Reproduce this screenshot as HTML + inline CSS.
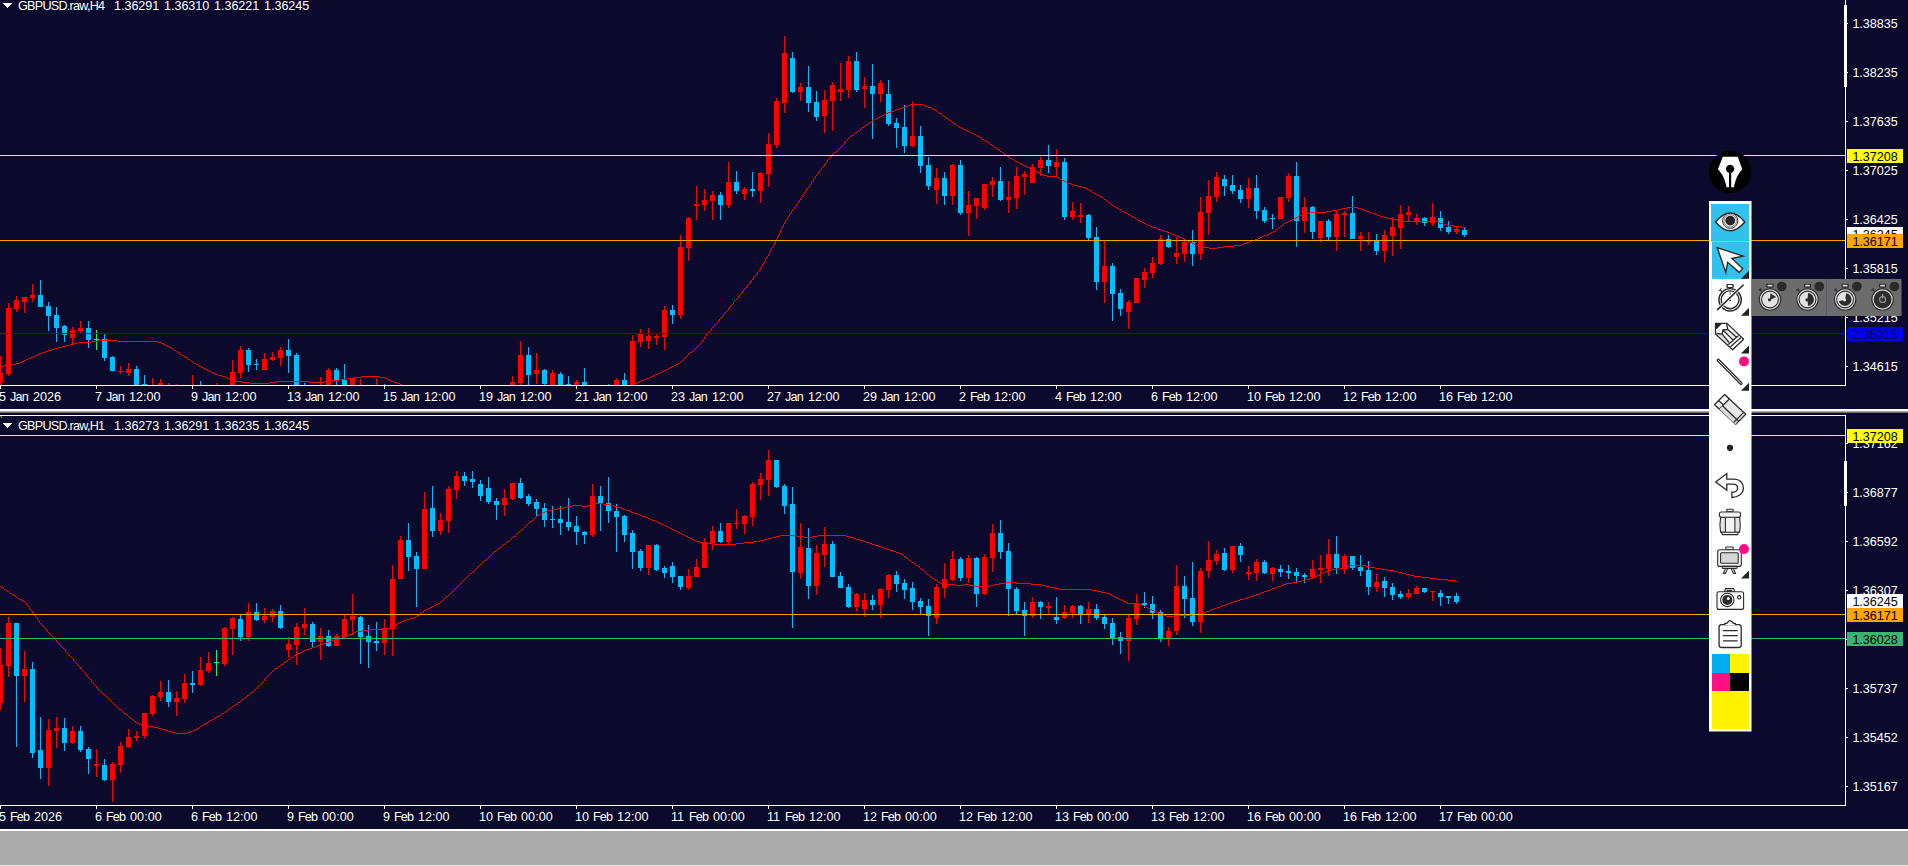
<!DOCTYPE html>
<html><head><meta charset="utf-8"><title>GBPUSD</title>
<style>
html,body{margin:0;padding:0;background:#0b0a2c;}
body{width:1908px;height:866px;position:relative;overflow:hidden;font-family:"Liberation Sans",sans-serif;}
.t{position:absolute;font-size:12.6px;line-height:16px;height:16px;white-space:nowrap;}
.t span{position:absolute;top:0;white-space:pre}
.b{position:absolute;left:1847px;width:56px}
.tri{position:absolute;width:0;height:0;border-left:4.5px solid transparent;border-right:4.5px solid transparent;border-top:5px solid #fff;}
</style></head><body>
<svg width="1908" height="866" viewBox="0 0 1908 866" style="position:absolute;left:0;top:0" shape-rendering="crispEdges">
<defs><clipPath id="ct"><rect x="0" y="0" width="1845" height="385"/></clipPath><clipPath id="cb"><rect x="0" y="416" width="1845" height="389"/></clipPath></defs>
<g clip-path="url(#ct)">
<rect x="0" y="356" width="1" height="29" fill="#ff0000"/>
<rect x="0" y="373" width="3" height="10" fill="#ff0000"/>
<rect x="8" y="303" width="1" height="73" fill="#ff0000"/>
<rect x="6" y="308" width="5" height="66" fill="#ff0000"/>
<rect x="16" y="296" width="1" height="16" fill="#ff0000"/>
<rect x="14" y="300" width="5" height="9" fill="#ff0000"/>
<rect x="24" y="297" width="1" height="16" fill="#ff0000"/>
<rect x="22" y="297" width="5" height="5" fill="#ff0000"/>
<rect x="32" y="284" width="1" height="18" fill="#ff0000"/>
<rect x="30" y="295" width="5" height="3" fill="#ff0000"/>
<rect x="40" y="280" width="1" height="27" fill="#00bfff"/>
<rect x="38" y="295" width="5" height="12" fill="#00bfff"/>
<rect x="48" y="302" width="1" height="29" fill="#00bfff"/>
<rect x="46" y="306" width="5" height="10" fill="#00bfff"/>
<rect x="56" y="307" width="1" height="35" fill="#00bfff"/>
<rect x="54" y="315" width="5" height="13" fill="#00bfff"/>
<rect x="64" y="325" width="1" height="17" fill="#00bfff"/>
<rect x="62" y="326" width="5" height="9" fill="#00bfff"/>
<rect x="72" y="327" width="1" height="17" fill="#ff0000"/>
<rect x="70" y="330" width="5" height="8" fill="#ff0000"/>
<rect x="80" y="321" width="1" height="12" fill="#ff0000"/>
<rect x="78" y="328" width="5" height="3" fill="#ff0000"/>
<rect x="88" y="321" width="1" height="27" fill="#00bfff"/>
<rect x="86" y="328" width="5" height="12" fill="#00bfff"/>
<rect x="96" y="330" width="1" height="20" fill="#00ff7f"/>
<rect x="94" y="339" width="5" height="1" fill="#00ff7f"/>
<rect x="104" y="334" width="1" height="27" fill="#00bfff"/>
<rect x="102" y="339" width="5" height="19" fill="#00bfff"/>
<rect x="112" y="356" width="1" height="15" fill="#00bfff"/>
<rect x="110" y="357" width="5" height="14" fill="#00bfff"/>
<rect x="120" y="366" width="1" height="8" fill="#ff0000"/>
<rect x="118" y="371" width="5" height="1" fill="#ff0000"/>
<rect x="128" y="363" width="1" height="13" fill="#ff0000"/>
<rect x="126" y="369" width="5" height="4" fill="#ff0000"/>
<rect x="136" y="366" width="1" height="19" fill="#00bfff"/>
<rect x="134" y="369" width="5" height="16" fill="#00bfff"/>
<rect x="144" y="375" width="1" height="10" fill="#00bfff"/>
<rect x="142" y="384" width="5" height="1" fill="#00bfff"/>
<rect x="152" y="378" width="1" height="7" fill="#ff0000"/>
<rect x="160" y="379" width="1" height="6" fill="#ff0000"/>
<rect x="158" y="383" width="5" height="2" fill="#ff0000"/>
<rect x="168" y="383" width="1" height="2" fill="#ff0000"/>
<rect x="176" y="384" width="1" height="1" fill="#ff0000"/>
<rect x="192" y="375" width="1" height="10" fill="#ff0000"/>
<rect x="200" y="381" width="1" height="4" fill="#00bfff"/>
<rect x="216" y="383" width="1" height="2" fill="#ff0000"/>
<rect x="232" y="360" width="1" height="25" fill="#ff0000"/>
<rect x="230" y="372" width="5" height="13" fill="#ff0000"/>
<rect x="240" y="346" width="1" height="32" fill="#ff0000"/>
<rect x="238" y="350" width="5" height="23" fill="#ff0000"/>
<rect x="248" y="348" width="1" height="24" fill="#00bfff"/>
<rect x="246" y="350" width="5" height="15" fill="#00bfff"/>
<rect x="256" y="359" width="1" height="11" fill="#00bfff"/>
<rect x="254" y="364" width="5" height="1" fill="#00bfff"/>
<rect x="264" y="353" width="1" height="17" fill="#ff0000"/>
<rect x="262" y="359" width="5" height="11" fill="#ff0000"/>
<rect x="272" y="352" width="1" height="9" fill="#ff0000"/>
<rect x="270" y="357" width="5" height="3" fill="#ff0000"/>
<rect x="280" y="347" width="1" height="19" fill="#ff0000"/>
<rect x="278" y="350" width="5" height="8" fill="#ff0000"/>
<rect x="288" y="339" width="1" height="34" fill="#00bfff"/>
<rect x="286" y="350" width="5" height="6" fill="#00bfff"/>
<rect x="296" y="353" width="1" height="32" fill="#00bfff"/>
<rect x="294" y="355" width="5" height="30" fill="#00bfff"/>
<rect x="304" y="383" width="1" height="2" fill="#00bfff"/>
<rect x="320" y="377" width="1" height="8" fill="#ff0000"/>
<rect x="328" y="368" width="1" height="17" fill="#ff0000"/>
<rect x="326" y="370" width="5" height="15" fill="#ff0000"/>
<rect x="336" y="368" width="1" height="17" fill="#00bfff"/>
<rect x="334" y="370" width="5" height="10" fill="#00bfff"/>
<rect x="344" y="364" width="1" height="21" fill="#00bfff"/>
<rect x="342" y="380" width="5" height="5" fill="#00bfff"/>
<rect x="352" y="378" width="1" height="7" fill="#ff0000"/>
<rect x="350" y="378" width="5" height="7" fill="#ff0000"/>
<rect x="360" y="379" width="1" height="6" fill="#ff0000"/>
<rect x="376" y="379" width="1" height="6" fill="#ff0000"/>
<rect x="384" y="384" width="1" height="1" fill="#00bfff"/>
<rect x="512" y="376" width="1" height="9" fill="#ff0000"/>
<rect x="510" y="382" width="5" height="3" fill="#ff0000"/>
<rect x="520" y="341" width="1" height="44" fill="#ff0000"/>
<rect x="518" y="355" width="5" height="28" fill="#ff0000"/>
<rect x="528" y="347" width="1" height="38" fill="#00bfff"/>
<rect x="526" y="355" width="5" height="20" fill="#00bfff"/>
<rect x="536" y="353" width="1" height="31" fill="#ff0000"/>
<rect x="534" y="370" width="5" height="4" fill="#ff0000"/>
<rect x="544" y="369" width="1" height="16" fill="#00bfff"/>
<rect x="542" y="370" width="5" height="14" fill="#00bfff"/>
<rect x="552" y="370" width="1" height="15" fill="#ff0000"/>
<rect x="550" y="373" width="5" height="12" fill="#ff0000"/>
<rect x="560" y="372" width="1" height="13" fill="#00bfff"/>
<rect x="558" y="374" width="5" height="11" fill="#00bfff"/>
<rect x="568" y="376" width="1" height="9" fill="#00bfff"/>
<rect x="566" y="384" width="5" height="1" fill="#00bfff"/>
<rect x="576" y="380" width="1" height="5" fill="#ff0000"/>
<rect x="574" y="382" width="5" height="3" fill="#ff0000"/>
<rect x="584" y="368" width="1" height="17" fill="#00bfff"/>
<rect x="582" y="382" width="5" height="3" fill="#00bfff"/>
<rect x="608" y="384" width="1" height="1" fill="#00bfff"/>
<rect x="616" y="378" width="1" height="7" fill="#ff0000"/>
<rect x="614" y="380" width="5" height="5" fill="#ff0000"/>
<rect x="624" y="373" width="1" height="12" fill="#00bfff"/>
<rect x="622" y="380" width="5" height="5" fill="#00bfff"/>
<rect x="632" y="335" width="1" height="50" fill="#ff0000"/>
<rect x="630" y="341" width="5" height="44" fill="#ff0000"/>
<rect x="640" y="329" width="1" height="18" fill="#ff0000"/>
<rect x="638" y="334" width="5" height="8" fill="#ff0000"/>
<rect x="648" y="328" width="1" height="21" fill="#ff0000"/>
<rect x="646" y="336" width="5" height="5" fill="#ff0000"/>
<rect x="656" y="334" width="1" height="11" fill="#ff0000"/>
<rect x="654" y="336" width="5" height="2" fill="#ff0000"/>
<rect x="664" y="306" width="1" height="44" fill="#ff0000"/>
<rect x="662" y="310" width="5" height="27" fill="#ff0000"/>
<rect x="672" y="305" width="1" height="19" fill="#00bfff"/>
<rect x="670" y="310" width="5" height="5" fill="#00bfff"/>
<rect x="680" y="235" width="1" height="84" fill="#ff0000"/>
<rect x="678" y="247" width="5" height="68" fill="#ff0000"/>
<rect x="688" y="217" width="1" height="44" fill="#ff0000"/>
<rect x="686" y="218" width="5" height="30" fill="#ff0000"/>
<rect x="696" y="186" width="1" height="34" fill="#ff0000"/>
<rect x="694" y="204" width="5" height="2" fill="#ff0000"/>
<rect x="704" y="189" width="1" height="22" fill="#ff0000"/>
<rect x="702" y="200" width="5" height="5" fill="#ff0000"/>
<rect x="712" y="191" width="1" height="29" fill="#ff0000"/>
<rect x="710" y="195" width="5" height="6" fill="#ff0000"/>
<rect x="720" y="192" width="1" height="28" fill="#00bfff"/>
<rect x="718" y="195" width="5" height="10" fill="#00bfff"/>
<rect x="728" y="162" width="1" height="46" fill="#ff0000"/>
<rect x="726" y="182" width="5" height="23" fill="#ff0000"/>
<rect x="736" y="171" width="1" height="23" fill="#00bfff"/>
<rect x="734" y="182" width="5" height="9" fill="#00bfff"/>
<rect x="744" y="187" width="1" height="13" fill="#ff0000"/>
<rect x="742" y="189" width="5" height="5" fill="#ff0000"/>
<rect x="752" y="172" width="1" height="25" fill="#00bfff"/>
<rect x="750" y="189" width="5" height="2" fill="#00bfff"/>
<rect x="760" y="172" width="1" height="31" fill="#ff0000"/>
<rect x="758" y="173" width="5" height="18" fill="#ff0000"/>
<rect x="768" y="133" width="1" height="54" fill="#ff0000"/>
<rect x="766" y="144" width="5" height="30" fill="#ff0000"/>
<rect x="776" y="98" width="1" height="50" fill="#ff0000"/>
<rect x="774" y="101" width="5" height="44" fill="#ff0000"/>
<rect x="784" y="36" width="1" height="77" fill="#ff0000"/>
<rect x="782" y="53" width="5" height="50" fill="#ff0000"/>
<rect x="792" y="52" width="1" height="41" fill="#00bfff"/>
<rect x="790" y="58" width="5" height="34" fill="#00bfff"/>
<rect x="800" y="83" width="1" height="18" fill="#ff0000"/>
<rect x="798" y="87" width="5" height="5" fill="#ff0000"/>
<rect x="808" y="66" width="1" height="46" fill="#00bfff"/>
<rect x="806" y="87" width="5" height="16" fill="#00bfff"/>
<rect x="816" y="91" width="1" height="30" fill="#00bfff"/>
<rect x="814" y="102" width="5" height="15" fill="#00bfff"/>
<rect x="824" y="90" width="1" height="43" fill="#ff0000"/>
<rect x="822" y="100" width="5" height="16" fill="#ff0000"/>
<rect x="832" y="82" width="1" height="49" fill="#ff0000"/>
<rect x="830" y="85" width="5" height="16" fill="#ff0000"/>
<rect x="840" y="63" width="1" height="38" fill="#ff0000"/>
<rect x="838" y="89" width="5" height="3" fill="#ff0000"/>
<rect x="848" y="56" width="1" height="42" fill="#ff0000"/>
<rect x="846" y="61" width="5" height="29" fill="#ff0000"/>
<rect x="856" y="52" width="1" height="40" fill="#00bfff"/>
<rect x="854" y="61" width="5" height="29" fill="#00bfff"/>
<rect x="864" y="77" width="1" height="31" fill="#ff0000"/>
<rect x="862" y="86" width="5" height="3" fill="#ff0000"/>
<rect x="872" y="64" width="1" height="75" fill="#00bfff"/>
<rect x="870" y="86" width="5" height="8" fill="#00bfff"/>
<rect x="880" y="80" width="1" height="22" fill="#ff0000"/>
<rect x="878" y="83" width="5" height="11" fill="#ff0000"/>
<rect x="888" y="80" width="1" height="46" fill="#00bfff"/>
<rect x="886" y="94" width="5" height="30" fill="#00bfff"/>
<rect x="896" y="118" width="1" height="30" fill="#00bfff"/>
<rect x="894" y="123" width="5" height="5" fill="#00bfff"/>
<rect x="904" y="105" width="1" height="48" fill="#00bfff"/>
<rect x="902" y="127" width="5" height="19" fill="#00bfff"/>
<rect x="912" y="101" width="1" height="46" fill="#ff0000"/>
<rect x="910" y="136" width="5" height="10" fill="#ff0000"/>
<rect x="920" y="126" width="1" height="47" fill="#00bfff"/>
<rect x="918" y="136" width="5" height="30" fill="#00bfff"/>
<rect x="928" y="157" width="1" height="33" fill="#00bfff"/>
<rect x="926" y="165" width="5" height="21" fill="#00bfff"/>
<rect x="936" y="168" width="1" height="36" fill="#ff0000"/>
<rect x="934" y="178" width="5" height="12" fill="#ff0000"/>
<rect x="944" y="172" width="1" height="33" fill="#00bfff"/>
<rect x="942" y="178" width="5" height="18" fill="#00bfff"/>
<rect x="952" y="164" width="1" height="41" fill="#ff0000"/>
<rect x="950" y="165" width="5" height="31" fill="#ff0000"/>
<rect x="960" y="160" width="1" height="55" fill="#00bfff"/>
<rect x="958" y="165" width="5" height="48" fill="#00bfff"/>
<rect x="968" y="191" width="1" height="45" fill="#ff0000"/>
<rect x="966" y="205" width="5" height="8" fill="#ff0000"/>
<rect x="976" y="198" width="1" height="21" fill="#ff0000"/>
<rect x="974" y="198" width="5" height="8" fill="#ff0000"/>
<rect x="984" y="184" width="1" height="26" fill="#ff0000"/>
<rect x="982" y="184" width="5" height="24" fill="#ff0000"/>
<rect x="992" y="177" width="1" height="20" fill="#ff0000"/>
<rect x="990" y="181" width="5" height="4" fill="#ff0000"/>
<rect x="1000" y="167" width="1" height="34" fill="#00bfff"/>
<rect x="998" y="181" width="5" height="19" fill="#00bfff"/>
<rect x="1008" y="181" width="1" height="32" fill="#ff0000"/>
<rect x="1006" y="197" width="5" height="3" fill="#ff0000"/>
<rect x="1016" y="167" width="1" height="42" fill="#ff0000"/>
<rect x="1014" y="176" width="5" height="22" fill="#ff0000"/>
<rect x="1024" y="171" width="1" height="24" fill="#ff0000"/>
<rect x="1022" y="174" width="5" height="3" fill="#ff0000"/>
<rect x="1032" y="164" width="1" height="19" fill="#ff0000"/>
<rect x="1030" y="167" width="5" height="16" fill="#ff0000"/>
<rect x="1040" y="157" width="1" height="19" fill="#ff0000"/>
<rect x="1038" y="160" width="5" height="8" fill="#ff0000"/>
<rect x="1048" y="145" width="1" height="28" fill="#00bfff"/>
<rect x="1046" y="160" width="5" height="6" fill="#00bfff"/>
<rect x="1056" y="149" width="1" height="28" fill="#ff0000"/>
<rect x="1054" y="162" width="5" height="5" fill="#ff0000"/>
<rect x="1064" y="158" width="1" height="62" fill="#00bfff"/>
<rect x="1062" y="162" width="5" height="55" fill="#00bfff"/>
<rect x="1072" y="202" width="1" height="18" fill="#ff0000"/>
<rect x="1070" y="211" width="5" height="6" fill="#ff0000"/>
<rect x="1080" y="203" width="1" height="20" fill="#ff0000"/>
<rect x="1078" y="215" width="5" height="2" fill="#ff0000"/>
<rect x="1088" y="214" width="1" height="26" fill="#00bfff"/>
<rect x="1086" y="215" width="5" height="23" fill="#00bfff"/>
<rect x="1096" y="227" width="1" height="63" fill="#00bfff"/>
<rect x="1094" y="237" width="5" height="45" fill="#00bfff"/>
<rect x="1104" y="241" width="1" height="62" fill="#ff0000"/>
<rect x="1102" y="266" width="5" height="16" fill="#ff0000"/>
<rect x="1112" y="263" width="1" height="58" fill="#00bfff"/>
<rect x="1110" y="266" width="5" height="28" fill="#00bfff"/>
<rect x="1120" y="289" width="1" height="27" fill="#00bfff"/>
<rect x="1118" y="293" width="5" height="16" fill="#00bfff"/>
<rect x="1128" y="300" width="1" height="29" fill="#ff0000"/>
<rect x="1126" y="302" width="5" height="10" fill="#ff0000"/>
<rect x="1136" y="278" width="1" height="25" fill="#ff0000"/>
<rect x="1134" y="278" width="5" height="25" fill="#ff0000"/>
<rect x="1144" y="268" width="1" height="20" fill="#ff0000"/>
<rect x="1142" y="272" width="5" height="8" fill="#ff0000"/>
<rect x="1152" y="257" width="1" height="21" fill="#ff0000"/>
<rect x="1150" y="263" width="5" height="10" fill="#ff0000"/>
<rect x="1160" y="235" width="1" height="30" fill="#ff0000"/>
<rect x="1158" y="239" width="5" height="25" fill="#ff0000"/>
<rect x="1168" y="235" width="1" height="13" fill="#00bfff"/>
<rect x="1166" y="239" width="5" height="8" fill="#00bfff"/>
<rect x="1176" y="237" width="1" height="27" fill="#ff0000"/>
<rect x="1174" y="253" width="5" height="4" fill="#ff0000"/>
<rect x="1184" y="240" width="1" height="22" fill="#ff0000"/>
<rect x="1182" y="242" width="5" height="12" fill="#ff0000"/>
<rect x="1192" y="230" width="1" height="36" fill="#00bfff"/>
<rect x="1190" y="242" width="5" height="12" fill="#00bfff"/>
<rect x="1200" y="197" width="1" height="63" fill="#ff0000"/>
<rect x="1198" y="212" width="5" height="42" fill="#ff0000"/>
<rect x="1208" y="180" width="1" height="55" fill="#ff0000"/>
<rect x="1206" y="196" width="5" height="17" fill="#ff0000"/>
<rect x="1216" y="172" width="1" height="30" fill="#ff0000"/>
<rect x="1214" y="177" width="5" height="20" fill="#ff0000"/>
<rect x="1224" y="175" width="1" height="21" fill="#00bfff"/>
<rect x="1222" y="179" width="5" height="7" fill="#00bfff"/>
<rect x="1232" y="175" width="1" height="19" fill="#00bfff"/>
<rect x="1230" y="185" width="5" height="6" fill="#00bfff"/>
<rect x="1240" y="185" width="1" height="18" fill="#00bfff"/>
<rect x="1238" y="190" width="5" height="9" fill="#00bfff"/>
<rect x="1248" y="178" width="1" height="30" fill="#ff0000"/>
<rect x="1246" y="188" width="5" height="11" fill="#ff0000"/>
<rect x="1256" y="175" width="1" height="44" fill="#00bfff"/>
<rect x="1254" y="188" width="5" height="23" fill="#00bfff"/>
<rect x="1264" y="207" width="1" height="16" fill="#00bfff"/>
<rect x="1262" y="210" width="5" height="11" fill="#00bfff"/>
<rect x="1272" y="214" width="1" height="15" fill="#00bfff"/>
<rect x="1270" y="218" width="5" height="1" fill="#00bfff"/>
<rect x="1280" y="197" width="1" height="22" fill="#ff0000"/>
<rect x="1278" y="197" width="5" height="22" fill="#ff0000"/>
<rect x="1288" y="173" width="1" height="29" fill="#ff0000"/>
<rect x="1286" y="176" width="5" height="22" fill="#ff0000"/>
<rect x="1296" y="162" width="1" height="85" fill="#00bfff"/>
<rect x="1294" y="176" width="5" height="45" fill="#00bfff"/>
<rect x="1304" y="197" width="1" height="36" fill="#ff0000"/>
<rect x="1302" y="207" width="5" height="14" fill="#ff0000"/>
<rect x="1312" y="206" width="1" height="33" fill="#00bfff"/>
<rect x="1310" y="207" width="5" height="25" fill="#00bfff"/>
<rect x="1320" y="221" width="1" height="21" fill="#ff0000"/>
<rect x="1318" y="221" width="5" height="17" fill="#ff0000"/>
<rect x="1328" y="219" width="1" height="21" fill="#00bfff"/>
<rect x="1326" y="221" width="5" height="16" fill="#00bfff"/>
<rect x="1336" y="211" width="1" height="40" fill="#ff0000"/>
<rect x="1334" y="214" width="5" height="23" fill="#ff0000"/>
<rect x="1344" y="211" width="1" height="26" fill="#ff0000"/>
<rect x="1342" y="213" width="5" height="2" fill="#ff0000"/>
<rect x="1352" y="196" width="1" height="43" fill="#00bfff"/>
<rect x="1350" y="213" width="5" height="26" fill="#00bfff"/>
<rect x="1360" y="232" width="1" height="19" fill="#ff0000"/>
<rect x="1358" y="236" width="5" height="3" fill="#ff0000"/>
<rect x="1368" y="232" width="1" height="13" fill="#ff0000"/>
<rect x="1366" y="240" width="5" height="2" fill="#ff0000"/>
<rect x="1376" y="234" width="1" height="21" fill="#00bfff"/>
<rect x="1374" y="241" width="5" height="10" fill="#00bfff"/>
<rect x="1384" y="230" width="1" height="32" fill="#ff0000"/>
<rect x="1382" y="235" width="5" height="16" fill="#ff0000"/>
<rect x="1392" y="217" width="1" height="39" fill="#ff0000"/>
<rect x="1390" y="227" width="5" height="9" fill="#ff0000"/>
<rect x="1400" y="205" width="1" height="44" fill="#ff0000"/>
<rect x="1398" y="214" width="5" height="14" fill="#ff0000"/>
<rect x="1408" y="206" width="1" height="15" fill="#ff0000"/>
<rect x="1406" y="212" width="5" height="3" fill="#ff0000"/>
<rect x="1416" y="214" width="1" height="11" fill="#ff0000"/>
<rect x="1414" y="218" width="5" height="4" fill="#ff0000"/>
<rect x="1424" y="217" width="1" height="9" fill="#00bfff"/>
<rect x="1422" y="218" width="5" height="5" fill="#00bfff"/>
<rect x="1432" y="203" width="1" height="23" fill="#ff0000"/>
<rect x="1430" y="217" width="5" height="6" fill="#ff0000"/>
<rect x="1440" y="211" width="1" height="20" fill="#00bfff"/>
<rect x="1438" y="218" width="5" height="10" fill="#00bfff"/>
<rect x="1448" y="221" width="1" height="13" fill="#00bfff"/>
<rect x="1446" y="227" width="5" height="5" fill="#00bfff"/>
<rect x="1456" y="227" width="1" height="7" fill="#ff0000"/>
<rect x="1454" y="229" width="5" height="3" fill="#ff0000"/>
<rect x="1464" y="228" width="1" height="9" fill="#00bfff"/>
<rect x="1462" y="230" width="5" height="5" fill="#00bfff"/>
<path d="M773,245h1v1h-1zM1196,245h3v1h-3zM1233,245h9v1h-9zM22,361h2v1h-2zM191,361h2v1h-2zM681,361h1v1h-1zM851,135h2v1h-2zM976,135h1v1h-1zM857,131h1v1h-1zM967,131h3v1h-3zM785,221h1v1h-1zM1140,221h2v1h-2zM1288,221h2v1h-2zM1401,221h38v1h-38zM227,378h2v1h-2zM346,378h7v1h-7zM385,378h2v1h-2zM646,378h3v1h-3zM796,204h1v1h-1zM1111,204h1v1h-1zM78,342h13v1h-13zM158,342h3v1h-3zM701,342h1v1h-1zM850,136h1v1h-1zM977,136h2v1h-2zM35,355h2v1h-2zM182,355h2v1h-2zM687,355h1v1h-1zM861,128h1v1h-1zM961,128h2v1h-2zM42,352h3v1h-3zM177,352h2v1h-2zM690,352h2v1h-2zM732,304h1v1h-1zM791,212h1v1h-1zM1124,212h2v1h-2zM1309,212h17v1h-17zM1369,212h3v1h-3zM780,232h1v1h-1zM1167,232h3v1h-3zM1271,232h2v1h-2zM231,380h5v1h-5zM331,380h9v1h-9zM389,380h2v1h-2zM641,380h3v1h-3zM242,382h8v1h-8zM269,382h6v1h-6zM309,382h15v1h-15zM394,382h3v1h-3zM637,382h2v1h-2zM815,176h1v1h-1zM1047,176h10v1h-10zM781,229h1v1h-1zM1158,229h3v1h-3zM1276,229h2v1h-2zM400,384h2v1h-2zM633,384h2v1h-2zM862,127h2v1h-2zM959,127h2v1h-2zM787,217h1v1h-1zM1133,217h2v1h-2zM1296,217h2v1h-2zM1383,217h4v1h-4zM97,340h20v1h-20zM702,340h1v1h-1zM91,341h6v1h-6zM117,341h41v1h-41zM702,341h1v1h-1zM789,214h1v1h-1zM1128,214h2v1h-2zM1303,214h3v1h-3zM1375,214h2v1h-2zM236,381h6v1h-6zM275,381h34v1h-34zM324,381h7v1h-7zM391,381h3v1h-3zM639,381h2v1h-2zM724,313h1v1h-1zM910,104h13v1h-13zM790,213h1v1h-1zM1126,213h2v1h-2zM1306,213h3v1h-3zM1372,213h3v1h-3zM824,165h1v1h-1zM1023,165h2v1h-2zM774,244h1v1h-1zM1194,244h2v1h-2zM1242,244h2v1h-2zM805,191h1v1h-1zM1091,191h1v1h-1zM838,149h1v1h-1zM997,149h2v1h-2zM826,162h1v1h-1zM1017,162h2v1h-2zM719,319h1v1h-1zM802,196h1v1h-1zM1099,196h2v1h-2zM804,192h1v1h-1zM1092,192h2v1h-2zM218,375h4v1h-4zM653,375h2v1h-2zM229,379h2v1h-2zM340,379h6v1h-6zM387,379h2v1h-2zM644,379h2v1h-2zM11,364h5v1h-5zM196,364h2v1h-2zM676,364h2v1h-2zM899,108h3v1h-3zM931,108h2v1h-2zM793,209h1v1h-1zM1119,209h2v1h-2zM1338,209h4v1h-4zM1361,209h2v1h-2zM795,206h1v1h-1zM1114,206h1v1h-1zM54,348h4v1h-4zM171,348h2v1h-2zM695,348h1v1h-1zM902,107h3v1h-3zM928,107h3v1h-3zM779,233h1v1h-1zM1170,233h2v1h-2zM1269,233h2v1h-2zM872,120h2v1h-2zM949,120h2v1h-2zM70,344h4v1h-4zM163,344h2v1h-2zM699,344h1v1h-1zM823,166h1v1h-1zM1025,166h2v1h-2zM33,356h2v1h-2zM184,356h1v1h-1zM686,356h1v1h-1zM786,219h1v1h-1zM1136,219h2v1h-2zM1292,219h2v1h-2zM1393,219h4v1h-4zM818,172h1v1h-1zM1037,172h2v1h-2zM796,205h1v1h-1zM1112,205h2v1h-2zM834,152h2v1h-2zM1002,152h1v1h-1zM787,218h1v1h-1zM1135,218h1v1h-1zM1294,218h2v1h-2zM1387,218h6v1h-6zM832,154h1v1h-1zM1004,154h2v1h-2zM782,226h1v1h-1zM1150,226h2v1h-2zM1280,226h2v1h-2zM1453,226h8v1h-8zM806,189h1v1h-1zM1087,189h2v1h-2zM4,365h7v1h-7zM198,365h1v1h-1zM674,365h2v1h-2zM777,237h1v1h-1zM1179,237h3v1h-3zM1260,237h2v1h-2zM31,357h2v1h-2zM185,357h2v1h-2zM685,357h1v1h-1zM878,117h2v1h-2zM945,117h1v1h-1zM222,376h3v1h-3zM361,376h19v1h-19zM651,376h2v1h-2zM782,227h1v1h-1zM1152,227h3v1h-3zM1279,227h1v1h-1zM1461,227h4v1h-4zM785,220h1v1h-1zM1138,220h2v1h-2zM1290,220h2v1h-2zM1397,220h4v1h-4zM817,174h1v1h-1zM1041,174h2v1h-2zM774,243h1v1h-1zM1192,243h2v1h-2zM1244,243h3v1h-3zM798,202h1v1h-1zM1108,202h2v1h-2zM26,359h2v1h-2zM188,359h2v1h-2zM683,359h1v1h-1zM404,386h1v1h-1zM631,386h1v1h-1zM836,151h1v1h-1zM1000,151h2v1h-2zM250,383h19v1h-19zM397,383h3v1h-3zM635,383h2v1h-2zM853,134h1v1h-1zM974,134h2v1h-2zM51,349h3v1h-3zM173,349h1v1h-1zM694,349h1v1h-1zM858,130h2v1h-2zM965,130h2v1h-2zM37,354h2v1h-2zM180,354h2v1h-2zM688,354h1v1h-1zM813,179h1v1h-1zM1060,179h2v1h-2zM773,246h1v1h-1zM1199,246h4v1h-4zM1223,246h10v1h-10zM745,288h1v1h-1zM726,311h1v1h-1zM209,371h2v1h-2zM662,371h2v1h-2zM788,216h1v1h-1zM1131,216h2v1h-2zM1298,216h2v1h-2zM1380,216h3v1h-3zM721,317h1v1h-1zM801,197h1v1h-1zM1101,197h2v1h-2zM800,199h1v1h-1zM1104,199h2v1h-2zM802,195h1v1h-1zM1097,195h2v1h-2zM839,148h1v1h-1zM996,148h1v1h-1zM62,346h4v1h-4zM167,346h2v1h-2zM697,346h1v1h-1zM753,277h1v1h-1zM778,235h1v1h-1zM1175,235h2v1h-2zM1264,235h3v1h-3zM748,284h1v1h-1zM713,326h1v1h-1zM894,110h2v1h-2zM935,110h2v1h-2zM868,123h1v1h-1zM953,123h2v1h-2zM792,210h1v1h-1zM1121,210h1v1h-1zM1332,210h6v1h-6zM1363,210h3v1h-3zM58,347h4v1h-4zM169,347h2v1h-2zM696,347h1v1h-1zM867,124h1v1h-1zM955,124h1v1h-1zM74,343h4v1h-4zM161,343h2v1h-2zM700,343h1v1h-1zM207,370h2v1h-2zM664,370h2v1h-2zM225,377h2v1h-2zM353,377h8v1h-8zM380,377h5v1h-5zM649,377h2v1h-2zM829,158h1v1h-1zM1010,158h2v1h-2zM807,188h1v1h-1zM1085,188h2v1h-2zM843,144h1v1h-1zM990,144h2v1h-2zM736,299h1v1h-1zM896,109h3v1h-3zM933,109h2v1h-2zM215,374h3v1h-3zM655,374h3v1h-3zM791,211h1v1h-1zM1122,211h2v1h-2zM1326,211h6v1h-6zM1366,211h3v1h-3zM402,385h2v1h-2zM632,385h1v1h-1zM849,137h1v1h-1zM979,137h2v1h-2zM869,122h2v1h-2zM952,122h1v1h-1zM827,161h1v1h-1zM1015,161h2v1h-2zM776,239h1v1h-1zM1184,239h2v1h-2zM1255,239h3v1h-3zM780,230h1v1h-1zM1161,230h3v1h-3zM1275,230h1v1h-1zM822,167h1v1h-1zM1027,167h2v1h-2zM794,208h1v1h-1zM1117,208h2v1h-2zM1342,208h5v1h-5zM1358,208h3v1h-3zM842,145h1v1h-1zM992,145h1v1h-1zM888,112h3v1h-3zM938,112h1v1h-1zM783,225h1v1h-1zM1148,225h2v1h-2zM1282,225h1v1h-1zM1447,225h6v1h-6zM833,153h1v1h-1zM1003,153h1v1h-1zM809,186h1v1h-1zM1077,186h5v1h-5zM780,231h1v1h-1zM1164,231h3v1h-3zM1273,231h2v1h-2zM48,350h3v1h-3zM174,350h2v1h-2zM693,350h1v1h-1zM765,260h1v1h-1zM784,223h1v1h-1zM1144,223h2v1h-2zM1284,223h2v1h-2zM1439,223h4v1h-4zM806,190h1v1h-1zM1089,190h2v1h-2zM905,106h2v1h-2zM925,106h3v1h-3zM821,169h1v1h-1zM1031,169h2v1h-2zM761,267h1v1h-1zM775,242h1v1h-1zM1190,242h2v1h-2zM1247,242h3v1h-3zM794,207h1v1h-1zM1115,207h2v1h-2zM1347,207h11v1h-11zM880,116h2v1h-2zM943,116h2v1h-2zM24,360h2v1h-2zM190,360h1v1h-1zM682,360h1v1h-1zM808,187h1v1h-1zM1082,187h3v1h-3zM797,203h1v1h-1zM1110,203h1v1h-1zM876,118h2v1h-2zM946,118h2v1h-2zM809,185h1v1h-1zM1073,185h4v1h-4zM749,283h1v1h-1zM730,306h1v1h-1zM777,238h1v1h-1zM1182,238h2v1h-2zM1258,238h2v1h-2zM39,353h3v1h-3zM179,353h1v1h-1zM689,353h1v1h-1zM725,312h1v1h-1zM706,335h1v1h-1zM772,247h1v1h-1zM1203,247h6v1h-6zM1217,247h6v1h-6zM907,105h3v1h-3zM923,105h2v1h-2zM800,198h1v1h-1zM1103,198h1v1h-1zM712,327h1v1h-1zM776,240h1v1h-1zM1186,240h2v1h-2zM1252,240h3v1h-3zM771,248h1v1h-1zM1209,248h8v1h-8zM768,254h1v1h-1zM827,160h1v1h-1zM1014,160h1v1h-1zM865,125h2v1h-2zM956,125h2v1h-2zM0,366h4v1h-4zM199,366h2v1h-2zM672,366h2v1h-2zM886,113h2v1h-2zM939,113h2v1h-2zM864,126h1v1h-1zM958,126h1v1h-1zM816,175h1v1h-1zM1043,175h4v1h-4zM884,114h2v1h-2zM941,114h1v1h-1zM28,358h3v1h-3zM187,358h1v1h-1zM684,358h1v1h-1zM804,193h1v1h-1zM1094,193h2v1h-2zM767,256h1v1h-1zM846,140h1v1h-1zM984,140h1v1h-1zM811,182h1v1h-1zM1066,182h2v1h-2zM763,263h1v1h-1zM211,372h2v1h-2zM660,372h2v1h-2zM759,270h1v1h-1zM814,178h1v1h-1zM1059,178h1v1h-1zM754,276h1v1h-1zM874,119h2v1h-2zM948,119h1v1h-1zM784,222h1v1h-1zM1142,222h2v1h-2zM1286,222h2v1h-2zM1439,222h1v1h-1zM783,224h1v1h-1zM1146,224h2v1h-2zM1283,224h1v1h-1zM1443,224h4v1h-4zM706,334h1v1h-1zM789,215h1v1h-1zM1130,215h1v1h-1zM1300,215h3v1h-3zM1377,215h3v1h-3zM742,292h1v1h-1zM737,298h1v1h-1zM718,321h1v1h-1zM779,234h1v1h-1zM1172,234h3v1h-3zM1267,234h2v1h-2zM753,278h1v1h-1zM855,132h2v1h-2zM970,132h2v1h-2zM729,307h1v1h-1zM710,330h1v1h-1zM705,336h1v1h-1zM831,155h1v1h-1zM1006,155h1v1h-1zM20,362h2v1h-2zM193,362h1v1h-1zM680,362h1v1h-1zM781,228h1v1h-1zM1155,228h3v1h-3zM1278,228h1v1h-1zM819,171h1v1h-1zM1035,171h2v1h-2zM815,177h1v1h-1zM1057,177h2v1h-2zM810,184h1v1h-1zM1071,184h2v1h-2zM16,363h4v1h-4zM194,363h2v1h-2zM678,363h2v1h-2zM845,141h1v1h-1zM985,141h2v1h-2zM812,181h1v1h-1zM1064,181h2v1h-2zM778,236h1v1h-1zM1177,236h2v1h-2zM1262,236h2v1h-2zM747,285h1v1h-1zM762,264h1v1h-1zM742,291h1v1h-1zM707,333h1v1h-1zM820,170h1v1h-1zM1033,170h2v1h-2zM723,314h1v1h-1zM758,271h1v1h-1zM718,320h1v1h-1zM775,241h1v1h-1zM1188,241h2v1h-2zM1250,241h2v1h-2zM203,368h2v1h-2zM668,368h2v1h-2zM746,287h1v1h-1zM860,129h1v1h-1zM963,129h2v1h-2zM741,293h1v1h-1zM722,316h1v1h-1zM757,273h1v1h-1zM717,322h1v1h-1zM844,143h1v1h-1zM989,143h1v1h-1zM66,345h4v1h-4zM165,345h2v1h-2zM698,345h1v1h-1zM871,121h1v1h-1zM951,121h1v1h-1zM201,367h2v1h-2zM670,367h2v1h-2zM882,115h2v1h-2zM942,115h1v1h-1zM768,255h1v1h-1zM811,183h1v1h-1zM1068,183h3v1h-3zM844,142h1v1h-1zM987,142h2v1h-2zM813,180h1v1h-1zM1062,180h2v1h-2zM818,173h1v1h-1zM1039,173h2v1h-2zM213,373h2v1h-2zM658,373h2v1h-2zM205,369h2v1h-2zM666,369h2v1h-2zM828,159h1v1h-1zM1012,159h2v1h-2zM735,300h1v1h-1zM751,280h1v1h-1zM746,286h1v1h-1zM711,328h1v1h-1zM891,111h3v1h-3zM937,111h1v1h-1zM45,351h3v1h-3zM176,351h1v1h-1zM692,351h1v1h-1zM757,272h1v1h-1zM847,139h1v1h-1zM982,139h2v1h-2zM750,282h1v1h-1zM825,163h1v1h-1zM1019,163h2v1h-2zM762,265h1v1h-1zM728,308h1v1h-1zM723,315h1v1h-1zM803,194h1v1h-1zM1096,194h1v1h-1zM739,295h1v1h-1zM704,337h1v1h-1zM798,201h1v1h-1zM1107,201h1v1h-1zM755,275h1v1h-1zM734,301h1v1h-1zM750,281h1v1h-1zM821,168h1v1h-1zM1029,168h2v1h-2zM738,297h1v1h-1zM703,339h1v1h-1zM830,156h1v1h-1zM1007,156h2v1h-2zM769,252h1v1h-1zM824,164h1v1h-1zM1021,164h2v1h-2zM752,279h1v1h-1zM837,150h1v1h-1zM999,150h1v1h-1zM848,138h1v1h-1zM981,138h1v1h-1zM764,261h1v1h-1zM760,268h1v1h-1zM740,294h1v1h-1zM840,147h1v1h-1zM994,147h2v1h-2zM799,200h1v1h-1zM1106,200h1v1h-1zM716,323h1v1h-1zM711,329h1v1h-1zM727,310h1v1h-1zM743,290h1v1h-1zM708,332h1v1h-1zM738,296h1v1h-1zM771,249h1v1h-1zM830,157h1v1h-1zM1009,157h1v1h-1zM770,251h1v1h-1zM766,258h1v1h-1zM854,133h1v1h-1zM972,133h2v1h-2zM756,274h1v1h-1zM733,303h1v1h-1zM728,309h1v1h-1zM744,289h1v1h-1zM704,338h1v1h-1zM720,318h1v1h-1zM715,324h1v1h-1zM731,305h1v1h-1zM770,250h1v1h-1zM766,257h1v1h-1zM769,253h1v1h-1zM841,146h1v1h-1zM993,146h1v1h-1zM765,259h1v1h-1zM761,266h1v1h-1zM733,302h1v1h-1zM714,325h1v1h-1zM764,262h1v1h-1zM709,331h1v1h-1zM760,269h1v1h-1z" fill="#ff0000"/>
<rect x="0" y="155" width="1845" height="1" fill="#ffff00"/>
<rect x="0" y="240" width="1845" height="1" fill="#ffa500"/>
<rect x="0" y="333" width="1845" height="1" fill="#0000ff"/>
</g>
<rect x="0" y="385" width="1846" height="1" fill="#fff"/>
<rect x="1845" y="0" width="1" height="386" fill="#fff"/>
<rect x="1844" y="5" width="3" height="82" fill="#fff"/>
<rect x="0" y="386" width="1" height="3" fill="#fff"/>
<rect x="96" y="386" width="1" height="3" fill="#fff"/>
<rect x="192" y="386" width="1" height="3" fill="#fff"/>
<rect x="288" y="386" width="1" height="3" fill="#fff"/>
<rect x="384" y="386" width="1" height="3" fill="#fff"/>
<rect x="480" y="386" width="1" height="3" fill="#fff"/>
<rect x="576" y="386" width="1" height="3" fill="#fff"/>
<rect x="672" y="386" width="1" height="3" fill="#fff"/>
<rect x="768" y="386" width="1" height="3" fill="#fff"/>
<rect x="864" y="386" width="1" height="3" fill="#fff"/>
<rect x="960" y="386" width="1" height="3" fill="#fff"/>
<rect x="1056" y="386" width="1" height="3" fill="#fff"/>
<rect x="1152" y="386" width="1" height="3" fill="#fff"/>
<rect x="1248" y="386" width="1" height="3" fill="#fff"/>
<rect x="1344" y="386" width="1" height="3" fill="#fff"/>
<rect x="1440" y="386" width="1" height="3" fill="#fff"/>
<rect x="1846" y="23" width="2" height="1" fill="#fff"/>
<rect x="1846" y="72" width="2" height="1" fill="#fff"/>
<rect x="1846" y="121" width="2" height="1" fill="#fff"/>
<rect x="1846" y="170" width="2" height="1" fill="#fff"/>
<rect x="1846" y="219" width="2" height="1" fill="#fff"/>
<rect x="1846" y="268" width="2" height="1" fill="#fff"/>
<rect x="1846" y="317" width="2" height="1" fill="#fff"/>
<rect x="1846" y="366" width="2" height="1" fill="#fff"/>
<rect x="0" y="409" width="1908" height="2" fill="#ffffff"/>
<rect x="0" y="411" width="1908" height="1" fill="#a2a2a0"/>
<rect x="0" y="412" width="1908" height="1" fill="#737370"/>
<g clip-path="url(#cb)">
<rect x="0" y="648" width="1" height="62" fill="#ff0000"/>
<rect x="0" y="665" width="3" height="38" fill="#ff0000"/>
<rect x="8" y="617" width="1" height="60" fill="#ff0000"/>
<rect x="6" y="623" width="5" height="43" fill="#ff0000"/>
<rect x="16" y="623" width="1" height="124" fill="#00bfff"/>
<rect x="14" y="623" width="5" height="53" fill="#00bfff"/>
<rect x="24" y="651" width="1" height="51" fill="#ff0000"/>
<rect x="22" y="669" width="5" height="7" fill="#ff0000"/>
<rect x="32" y="662" width="1" height="96" fill="#00bfff"/>
<rect x="30" y="669" width="5" height="84" fill="#00bfff"/>
<rect x="40" y="717" width="1" height="62" fill="#00bfff"/>
<rect x="38" y="750" width="5" height="18" fill="#00bfff"/>
<rect x="48" y="719" width="1" height="67" fill="#ff0000"/>
<rect x="46" y="730" width="5" height="38" fill="#ff0000"/>
<rect x="56" y="717" width="1" height="31" fill="#ff0000"/>
<rect x="54" y="728" width="5" height="3" fill="#ff0000"/>
<rect x="64" y="718" width="1" height="33" fill="#00bfff"/>
<rect x="62" y="728" width="5" height="15" fill="#00bfff"/>
<rect x="72" y="726" width="1" height="18" fill="#ff0000"/>
<rect x="70" y="731" width="5" height="12" fill="#ff0000"/>
<rect x="80" y="726" width="1" height="26" fill="#00bfff"/>
<rect x="78" y="731" width="5" height="19" fill="#00bfff"/>
<rect x="88" y="747" width="1" height="27" fill="#00bfff"/>
<rect x="86" y="749" width="5" height="10" fill="#00bfff"/>
<rect x="96" y="749" width="1" height="28" fill="#ff0000"/>
<rect x="94" y="764" width="5" height="2" fill="#ff0000"/>
<rect x="104" y="759" width="1" height="22" fill="#00bfff"/>
<rect x="102" y="765" width="5" height="15" fill="#00bfff"/>
<rect x="112" y="762" width="1" height="40" fill="#ff0000"/>
<rect x="110" y="764" width="5" height="16" fill="#ff0000"/>
<rect x="120" y="742" width="1" height="31" fill="#ff0000"/>
<rect x="118" y="746" width="5" height="19" fill="#ff0000"/>
<rect x="128" y="729" width="1" height="19" fill="#ff0000"/>
<rect x="126" y="737" width="5" height="10" fill="#ff0000"/>
<rect x="136" y="731" width="1" height="10" fill="#ff0000"/>
<rect x="134" y="736" width="5" height="2" fill="#ff0000"/>
<rect x="144" y="713" width="1" height="26" fill="#ff0000"/>
<rect x="142" y="713" width="5" height="23" fill="#ff0000"/>
<rect x="152" y="695" width="1" height="21" fill="#ff0000"/>
<rect x="150" y="696" width="5" height="18" fill="#ff0000"/>
<rect x="160" y="681" width="1" height="20" fill="#ff0000"/>
<rect x="158" y="692" width="5" height="5" fill="#ff0000"/>
<rect x="168" y="680" width="1" height="27" fill="#00bfff"/>
<rect x="166" y="692" width="5" height="10" fill="#00bfff"/>
<rect x="176" y="691" width="1" height="25" fill="#ff0000"/>
<rect x="174" y="698" width="5" height="4" fill="#ff0000"/>
<rect x="184" y="674" width="1" height="29" fill="#ff0000"/>
<rect x="182" y="683" width="5" height="16" fill="#ff0000"/>
<rect x="192" y="671" width="1" height="22" fill="#00bfff"/>
<rect x="190" y="683" width="5" height="2" fill="#00bfff"/>
<rect x="200" y="657" width="1" height="29" fill="#ff0000"/>
<rect x="198" y="670" width="5" height="15" fill="#ff0000"/>
<rect x="208" y="652" width="1" height="21" fill="#ff0000"/>
<rect x="206" y="663" width="5" height="8" fill="#ff0000"/>
<rect x="216" y="650" width="1" height="26" fill="#00ff7f"/>
<rect x="214" y="662" width="5" height="1" fill="#00ff7f"/>
<rect x="224" y="627" width="1" height="39" fill="#ff0000"/>
<rect x="222" y="628" width="5" height="36" fill="#ff0000"/>
<rect x="232" y="617" width="1" height="38" fill="#ff0000"/>
<rect x="230" y="618" width="5" height="11" fill="#ff0000"/>
<rect x="240" y="615" width="1" height="26" fill="#00bfff"/>
<rect x="238" y="619" width="5" height="18" fill="#00bfff"/>
<rect x="248" y="603" width="1" height="38" fill="#ff0000"/>
<rect x="246" y="612" width="5" height="25" fill="#ff0000"/>
<rect x="256" y="603" width="1" height="18" fill="#00bfff"/>
<rect x="254" y="612" width="5" height="8" fill="#00bfff"/>
<rect x="264" y="608" width="1" height="15" fill="#ff0000"/>
<rect x="262" y="616" width="5" height="4" fill="#ff0000"/>
<rect x="272" y="609" width="1" height="13" fill="#ff0000"/>
<rect x="270" y="611" width="5" height="6" fill="#ff0000"/>
<rect x="280" y="605" width="1" height="24" fill="#00bfff"/>
<rect x="278" y="611" width="5" height="17" fill="#00bfff"/>
<rect x="288" y="637" width="1" height="21" fill="#ff0000"/>
<rect x="286" y="644" width="5" height="6" fill="#ff0000"/>
<rect x="296" y="623" width="1" height="42" fill="#ff0000"/>
<rect x="294" y="627" width="5" height="18" fill="#ff0000"/>
<rect x="304" y="608" width="1" height="27" fill="#ff0000"/>
<rect x="302" y="624" width="5" height="4" fill="#ff0000"/>
<rect x="312" y="622" width="1" height="25" fill="#00bfff"/>
<rect x="310" y="624" width="5" height="18" fill="#00bfff"/>
<rect x="320" y="628" width="1" height="32" fill="#ff0000"/>
<rect x="318" y="636" width="5" height="6" fill="#ff0000"/>
<rect x="328" y="630" width="1" height="17" fill="#00bfff"/>
<rect x="326" y="636" width="5" height="10" fill="#00bfff"/>
<rect x="336" y="634" width="1" height="12" fill="#ff0000"/>
<rect x="334" y="636" width="5" height="10" fill="#ff0000"/>
<rect x="344" y="615" width="1" height="23" fill="#ff0000"/>
<rect x="342" y="619" width="5" height="18" fill="#ff0000"/>
<rect x="352" y="594" width="1" height="41" fill="#ff0000"/>
<rect x="350" y="616" width="5" height="4" fill="#ff0000"/>
<rect x="360" y="616" width="1" height="48" fill="#00bfff"/>
<rect x="358" y="617" width="5" height="20" fill="#00bfff"/>
<rect x="368" y="625" width="1" height="43" fill="#00bfff"/>
<rect x="366" y="636" width="5" height="6" fill="#00bfff"/>
<rect x="376" y="622" width="1" height="29" fill="#00bfff"/>
<rect x="374" y="641" width="5" height="2" fill="#00bfff"/>
<rect x="384" y="619" width="1" height="36" fill="#ff0000"/>
<rect x="382" y="628" width="5" height="15" fill="#ff0000"/>
<rect x="392" y="565" width="1" height="91" fill="#ff0000"/>
<rect x="390" y="579" width="5" height="50" fill="#ff0000"/>
<rect x="400" y="536" width="1" height="43" fill="#ff0000"/>
<rect x="398" y="540" width="5" height="39" fill="#ff0000"/>
<rect x="408" y="523" width="1" height="48" fill="#00bfff"/>
<rect x="406" y="540" width="5" height="17" fill="#00bfff"/>
<rect x="416" y="552" width="1" height="55" fill="#00bfff"/>
<rect x="414" y="556" width="5" height="13" fill="#00bfff"/>
<rect x="424" y="492" width="1" height="77" fill="#ff0000"/>
<rect x="422" y="509" width="5" height="60" fill="#ff0000"/>
<rect x="432" y="486" width="1" height="51" fill="#00bfff"/>
<rect x="430" y="508" width="5" height="23" fill="#00bfff"/>
<rect x="440" y="513" width="1" height="22" fill="#ff0000"/>
<rect x="438" y="520" width="5" height="11" fill="#ff0000"/>
<rect x="448" y="486" width="1" height="47" fill="#ff0000"/>
<rect x="446" y="489" width="5" height="32" fill="#ff0000"/>
<rect x="456" y="471" width="1" height="28" fill="#ff0000"/>
<rect x="454" y="476" width="5" height="14" fill="#ff0000"/>
<rect x="464" y="472" width="1" height="14" fill="#00bfff"/>
<rect x="462" y="476" width="5" height="5" fill="#00bfff"/>
<rect x="472" y="471" width="1" height="17" fill="#00bfff"/>
<rect x="470" y="479" width="5" height="3" fill="#00bfff"/>
<rect x="480" y="480" width="1" height="21" fill="#00bfff"/>
<rect x="478" y="484" width="5" height="12" fill="#00bfff"/>
<rect x="488" y="477" width="1" height="27" fill="#00bfff"/>
<rect x="486" y="488" width="5" height="14" fill="#00bfff"/>
<rect x="496" y="498" width="1" height="22" fill="#00bfff"/>
<rect x="494" y="501" width="5" height="4" fill="#00bfff"/>
<rect x="504" y="489" width="1" height="27" fill="#ff0000"/>
<rect x="502" y="498" width="5" height="7" fill="#ff0000"/>
<rect x="512" y="483" width="1" height="17" fill="#ff0000"/>
<rect x="510" y="483" width="5" height="16" fill="#ff0000"/>
<rect x="520" y="478" width="1" height="21" fill="#00bfff"/>
<rect x="518" y="483" width="5" height="15" fill="#00bfff"/>
<rect x="528" y="494" width="1" height="12" fill="#00bfff"/>
<rect x="526" y="496" width="5" height="8" fill="#00bfff"/>
<rect x="536" y="499" width="1" height="17" fill="#00bfff"/>
<rect x="534" y="502" width="5" height="7" fill="#00bfff"/>
<rect x="544" y="503" width="1" height="24" fill="#00bfff"/>
<rect x="542" y="508" width="5" height="12" fill="#00bfff"/>
<rect x="552" y="506" width="1" height="22" fill="#00bfff"/>
<rect x="550" y="519" width="5" height="1" fill="#00bfff"/>
<rect x="560" y="506" width="1" height="29" fill="#00bfff"/>
<rect x="558" y="519" width="5" height="4" fill="#00bfff"/>
<rect x="568" y="498" width="1" height="33" fill="#00bfff"/>
<rect x="566" y="522" width="5" height="5" fill="#00bfff"/>
<rect x="576" y="516" width="1" height="29" fill="#00bfff"/>
<rect x="574" y="526" width="5" height="6" fill="#00bfff"/>
<rect x="584" y="531" width="1" height="13" fill="#00bfff"/>
<rect x="582" y="532" width="5" height="3" fill="#00bfff"/>
<rect x="592" y="484" width="1" height="53" fill="#ff0000"/>
<rect x="590" y="496" width="5" height="39" fill="#ff0000"/>
<rect x="600" y="486" width="1" height="45" fill="#00bfff"/>
<rect x="598" y="496" width="5" height="7" fill="#00bfff"/>
<rect x="608" y="477" width="1" height="46" fill="#00bfff"/>
<rect x="606" y="503" width="5" height="8" fill="#00bfff"/>
<rect x="616" y="504" width="1" height="48" fill="#00bfff"/>
<rect x="614" y="511" width="5" height="6" fill="#00bfff"/>
<rect x="624" y="515" width="1" height="27" fill="#00bfff"/>
<rect x="622" y="516" width="5" height="19" fill="#00bfff"/>
<rect x="632" y="530" width="1" height="39" fill="#00bfff"/>
<rect x="630" y="533" width="5" height="19" fill="#00bfff"/>
<rect x="640" y="549" width="1" height="22" fill="#00bfff"/>
<rect x="638" y="551" width="5" height="17" fill="#00bfff"/>
<rect x="648" y="545" width="1" height="30" fill="#ff0000"/>
<rect x="646" y="545" width="5" height="23" fill="#ff0000"/>
<rect x="656" y="544" width="1" height="27" fill="#00bfff"/>
<rect x="654" y="545" width="5" height="25" fill="#00bfff"/>
<rect x="664" y="566" width="1" height="12" fill="#00bfff"/>
<rect x="662" y="568" width="5" height="5" fill="#00bfff"/>
<rect x="672" y="562" width="1" height="21" fill="#00bfff"/>
<rect x="670" y="566" width="5" height="11" fill="#00bfff"/>
<rect x="680" y="576" width="1" height="14" fill="#00bfff"/>
<rect x="678" y="576" width="5" height="11" fill="#00bfff"/>
<rect x="688" y="569" width="1" height="21" fill="#ff0000"/>
<rect x="686" y="576" width="5" height="12" fill="#ff0000"/>
<rect x="696" y="559" width="1" height="18" fill="#ff0000"/>
<rect x="694" y="567" width="5" height="10" fill="#ff0000"/>
<rect x="704" y="538" width="1" height="30" fill="#ff0000"/>
<rect x="702" y="542" width="5" height="26" fill="#ff0000"/>
<rect x="712" y="526" width="1" height="24" fill="#ff0000"/>
<rect x="710" y="531" width="5" height="12" fill="#ff0000"/>
<rect x="720" y="523" width="1" height="20" fill="#00bfff"/>
<rect x="718" y="531" width="5" height="11" fill="#00bfff"/>
<rect x="728" y="523" width="1" height="22" fill="#ff0000"/>
<rect x="726" y="523" width="5" height="19" fill="#ff0000"/>
<rect x="736" y="509" width="1" height="20" fill="#ff0000"/>
<rect x="734" y="523" width="5" height="1" fill="#ff0000"/>
<rect x="744" y="515" width="1" height="19" fill="#ff0000"/>
<rect x="742" y="516" width="5" height="8" fill="#ff0000"/>
<rect x="752" y="482" width="1" height="44" fill="#ff0000"/>
<rect x="750" y="484" width="5" height="33" fill="#ff0000"/>
<rect x="760" y="473" width="1" height="27" fill="#ff0000"/>
<rect x="758" y="479" width="5" height="6" fill="#ff0000"/>
<rect x="768" y="450" width="1" height="46" fill="#ff0000"/>
<rect x="766" y="460" width="5" height="20" fill="#ff0000"/>
<rect x="776" y="460" width="1" height="28" fill="#00bfff"/>
<rect x="774" y="460" width="5" height="27" fill="#00bfff"/>
<rect x="784" y="484" width="1" height="30" fill="#00bfff"/>
<rect x="782" y="486" width="5" height="20" fill="#00bfff"/>
<rect x="792" y="487" width="1" height="141" fill="#00bfff"/>
<rect x="790" y="504" width="5" height="68" fill="#00bfff"/>
<rect x="800" y="523" width="1" height="56" fill="#ff0000"/>
<rect x="798" y="547" width="5" height="26" fill="#ff0000"/>
<rect x="808" y="528" width="1" height="71" fill="#00bfff"/>
<rect x="806" y="548" width="5" height="38" fill="#00bfff"/>
<rect x="816" y="545" width="1" height="50" fill="#ff0000"/>
<rect x="814" y="553" width="5" height="33" fill="#ff0000"/>
<rect x="824" y="527" width="1" height="40" fill="#ff0000"/>
<rect x="822" y="544" width="5" height="11" fill="#ff0000"/>
<rect x="832" y="541" width="1" height="36" fill="#00bfff"/>
<rect x="830" y="544" width="5" height="33" fill="#00bfff"/>
<rect x="840" y="572" width="1" height="16" fill="#00bfff"/>
<rect x="838" y="576" width="5" height="12" fill="#00bfff"/>
<rect x="848" y="584" width="1" height="24" fill="#00bfff"/>
<rect x="846" y="587" width="5" height="20" fill="#00bfff"/>
<rect x="856" y="593" width="1" height="18" fill="#ff0000"/>
<rect x="854" y="594" width="5" height="13" fill="#ff0000"/>
<rect x="864" y="593" width="1" height="24" fill="#ff0000"/>
<rect x="862" y="600" width="5" height="9" fill="#ff0000"/>
<rect x="872" y="595" width="1" height="15" fill="#00bfff"/>
<rect x="870" y="600" width="5" height="5" fill="#00bfff"/>
<rect x="880" y="588" width="1" height="30" fill="#ff0000"/>
<rect x="878" y="589" width="5" height="16" fill="#ff0000"/>
<rect x="888" y="574" width="1" height="24" fill="#ff0000"/>
<rect x="886" y="575" width="5" height="15" fill="#ff0000"/>
<rect x="896" y="571" width="1" height="21" fill="#00bfff"/>
<rect x="894" y="575" width="5" height="9" fill="#00bfff"/>
<rect x="904" y="579" width="1" height="20" fill="#00bfff"/>
<rect x="902" y="583" width="5" height="7" fill="#00bfff"/>
<rect x="912" y="582" width="1" height="28" fill="#00bfff"/>
<rect x="910" y="588" width="5" height="14" fill="#00bfff"/>
<rect x="920" y="598" width="1" height="16" fill="#00bfff"/>
<rect x="918" y="601" width="5" height="6" fill="#00bfff"/>
<rect x="928" y="599" width="1" height="37" fill="#00bfff"/>
<rect x="926" y="606" width="5" height="10" fill="#00bfff"/>
<rect x="936" y="584" width="1" height="40" fill="#ff0000"/>
<rect x="934" y="587" width="5" height="31" fill="#ff0000"/>
<rect x="944" y="563" width="1" height="35" fill="#ff0000"/>
<rect x="942" y="579" width="5" height="9" fill="#ff0000"/>
<rect x="952" y="551" width="1" height="30" fill="#ff0000"/>
<rect x="950" y="559" width="5" height="21" fill="#ff0000"/>
<rect x="960" y="557" width="1" height="24" fill="#00bfff"/>
<rect x="958" y="559" width="5" height="19" fill="#00bfff"/>
<rect x="968" y="555" width="1" height="28" fill="#ff0000"/>
<rect x="966" y="558" width="5" height="20" fill="#ff0000"/>
<rect x="976" y="557" width="1" height="50" fill="#00bfff"/>
<rect x="974" y="558" width="5" height="36" fill="#00bfff"/>
<rect x="984" y="554" width="1" height="41" fill="#ff0000"/>
<rect x="982" y="557" width="5" height="37" fill="#ff0000"/>
<rect x="992" y="524" width="1" height="48" fill="#ff0000"/>
<rect x="990" y="533" width="5" height="25" fill="#ff0000"/>
<rect x="1000" y="520" width="1" height="39" fill="#00bfff"/>
<rect x="998" y="533" width="5" height="19" fill="#00bfff"/>
<rect x="1008" y="543" width="1" height="73" fill="#00bfff"/>
<rect x="1006" y="551" width="5" height="38" fill="#00bfff"/>
<rect x="1016" y="587" width="1" height="27" fill="#00bfff"/>
<rect x="1014" y="589" width="5" height="22" fill="#00bfff"/>
<rect x="1024" y="602" width="1" height="34" fill="#00bfff"/>
<rect x="1022" y="610" width="5" height="6" fill="#00bfff"/>
<rect x="1032" y="597" width="1" height="21" fill="#ff0000"/>
<rect x="1030" y="602" width="5" height="14" fill="#ff0000"/>
<rect x="1040" y="601" width="1" height="18" fill="#00bfff"/>
<rect x="1038" y="602" width="5" height="5" fill="#00bfff"/>
<rect x="1048" y="602" width="1" height="12" fill="#ff0000"/>
<rect x="1046" y="606" width="5" height="2" fill="#ff0000"/>
<rect x="1056" y="597" width="1" height="27" fill="#00bfff"/>
<rect x="1054" y="617" width="5" height="3" fill="#00bfff"/>
<rect x="1064" y="605" width="1" height="14" fill="#ff0000"/>
<rect x="1062" y="612" width="5" height="6" fill="#ff0000"/>
<rect x="1072" y="605" width="1" height="13" fill="#ff0000"/>
<rect x="1070" y="606" width="5" height="7" fill="#ff0000"/>
<rect x="1080" y="605" width="1" height="19" fill="#00bfff"/>
<rect x="1078" y="606" width="5" height="8" fill="#00bfff"/>
<rect x="1088" y="602" width="1" height="21" fill="#ff0000"/>
<rect x="1086" y="609" width="5" height="5" fill="#ff0000"/>
<rect x="1096" y="604" width="1" height="16" fill="#00bfff"/>
<rect x="1094" y="609" width="5" height="9" fill="#00bfff"/>
<rect x="1104" y="615" width="1" height="14" fill="#00bfff"/>
<rect x="1102" y="617" width="5" height="7" fill="#00bfff"/>
<rect x="1112" y="618" width="1" height="27" fill="#00bfff"/>
<rect x="1110" y="623" width="5" height="15" fill="#00bfff"/>
<rect x="1120" y="632" width="1" height="22" fill="#00bfff"/>
<rect x="1118" y="637" width="5" height="4" fill="#00bfff"/>
<rect x="1128" y="615" width="1" height="46" fill="#ff0000"/>
<rect x="1126" y="618" width="5" height="23" fill="#ff0000"/>
<rect x="1136" y="594" width="1" height="31" fill="#ff0000"/>
<rect x="1134" y="603" width="5" height="16" fill="#ff0000"/>
<rect x="1144" y="592" width="1" height="16" fill="#00bfff"/>
<rect x="1142" y="603" width="5" height="2" fill="#00bfff"/>
<rect x="1152" y="596" width="1" height="23" fill="#00bfff"/>
<rect x="1150" y="604" width="5" height="9" fill="#00bfff"/>
<rect x="1160" y="610" width="1" height="32" fill="#00bfff"/>
<rect x="1158" y="612" width="5" height="26" fill="#00bfff"/>
<rect x="1168" y="627" width="1" height="19" fill="#ff0000"/>
<rect x="1166" y="631" width="5" height="7" fill="#ff0000"/>
<rect x="1176" y="565" width="1" height="70" fill="#ff0000"/>
<rect x="1174" y="586" width="5" height="45" fill="#ff0000"/>
<rect x="1184" y="576" width="1" height="42" fill="#00bfff"/>
<rect x="1182" y="586" width="5" height="13" fill="#00bfff"/>
<rect x="1192" y="562" width="1" height="64" fill="#00bfff"/>
<rect x="1190" y="598" width="5" height="24" fill="#00bfff"/>
<rect x="1200" y="568" width="1" height="65" fill="#ff0000"/>
<rect x="1198" y="571" width="5" height="51" fill="#ff0000"/>
<rect x="1208" y="541" width="1" height="37" fill="#ff0000"/>
<rect x="1206" y="560" width="5" height="11" fill="#ff0000"/>
<rect x="1216" y="550" width="1" height="15" fill="#ff0000"/>
<rect x="1214" y="554" width="5" height="7" fill="#ff0000"/>
<rect x="1224" y="548" width="1" height="23" fill="#00bfff"/>
<rect x="1222" y="553" width="5" height="17" fill="#00bfff"/>
<rect x="1232" y="546" width="1" height="27" fill="#ff0000"/>
<rect x="1230" y="546" width="5" height="24" fill="#ff0000"/>
<rect x="1240" y="543" width="1" height="19" fill="#00bfff"/>
<rect x="1238" y="546" width="5" height="9" fill="#00bfff"/>
<rect x="1248" y="566" width="1" height="14" fill="#ff0000"/>
<rect x="1246" y="572" width="5" height="2" fill="#ff0000"/>
<rect x="1256" y="559" width="1" height="22" fill="#ff0000"/>
<rect x="1254" y="562" width="5" height="11" fill="#ff0000"/>
<rect x="1264" y="560" width="1" height="14" fill="#00bfff"/>
<rect x="1262" y="562" width="5" height="11" fill="#00bfff"/>
<rect x="1272" y="567" width="1" height="14" fill="#ff0000"/>
<rect x="1270" y="568" width="5" height="6" fill="#ff0000"/>
<rect x="1280" y="565" width="1" height="12" fill="#00bfff"/>
<rect x="1278" y="569" width="5" height="3" fill="#00bfff"/>
<rect x="1288" y="565" width="1" height="14" fill="#00bfff"/>
<rect x="1286" y="571" width="5" height="2" fill="#00bfff"/>
<rect x="1296" y="568" width="1" height="14" fill="#00bfff"/>
<rect x="1294" y="572" width="5" height="4" fill="#00bfff"/>
<rect x="1304" y="573" width="1" height="10" fill="#00bfff"/>
<rect x="1302" y="575" width="5" height="2" fill="#00bfff"/>
<rect x="1312" y="560" width="1" height="18" fill="#ff0000"/>
<rect x="1310" y="569" width="5" height="8" fill="#ff0000"/>
<rect x="1320" y="555" width="1" height="28" fill="#ff0000"/>
<rect x="1318" y="568" width="5" height="2" fill="#ff0000"/>
<rect x="1328" y="539" width="1" height="37" fill="#ff0000"/>
<rect x="1326" y="554" width="5" height="15" fill="#ff0000"/>
<rect x="1336" y="536" width="1" height="38" fill="#00bfff"/>
<rect x="1334" y="554" width="5" height="14" fill="#00bfff"/>
<rect x="1344" y="554" width="1" height="20" fill="#ff0000"/>
<rect x="1342" y="556" width="5" height="13" fill="#ff0000"/>
<rect x="1352" y="556" width="1" height="14" fill="#00bfff"/>
<rect x="1350" y="556" width="5" height="12" fill="#00bfff"/>
<rect x="1360" y="555" width="1" height="21" fill="#00bfff"/>
<rect x="1358" y="567" width="5" height="4" fill="#00bfff"/>
<rect x="1368" y="561" width="1" height="34" fill="#00bfff"/>
<rect x="1366" y="570" width="5" height="17" fill="#00bfff"/>
<rect x="1376" y="574" width="1" height="18" fill="#ff0000"/>
<rect x="1374" y="582" width="5" height="5" fill="#ff0000"/>
<rect x="1384" y="577" width="1" height="20" fill="#00bfff"/>
<rect x="1382" y="581" width="5" height="7" fill="#00bfff"/>
<rect x="1392" y="583" width="1" height="17" fill="#00bfff"/>
<rect x="1390" y="587" width="5" height="8" fill="#00bfff"/>
<rect x="1400" y="591" width="1" height="8" fill="#00bfff"/>
<rect x="1398" y="594" width="5" height="3" fill="#00bfff"/>
<rect x="1408" y="589" width="1" height="10" fill="#ff0000"/>
<rect x="1406" y="593" width="5" height="4" fill="#ff0000"/>
<rect x="1416" y="586" width="1" height="8" fill="#ff0000"/>
<rect x="1414" y="588" width="5" height="6" fill="#ff0000"/>
<rect x="1424" y="588" width="1" height="5" fill="#00bfff"/>
<rect x="1422" y="588" width="5" height="4" fill="#00bfff"/>
<rect x="1432" y="591" width="1" height="10" fill="#ff0000"/>
<rect x="1430" y="591" width="5" height="1" fill="#ff0000"/>
<rect x="1440" y="590" width="1" height="16" fill="#00bfff"/>
<rect x="1438" y="593" width="5" height="4" fill="#00bfff"/>
<rect x="1448" y="596" width="1" height="8" fill="#00bfff"/>
<rect x="1446" y="596" width="5" height="2" fill="#00bfff"/>
<rect x="1456" y="593" width="1" height="11" fill="#00bfff"/>
<rect x="1454" y="596" width="5" height="6" fill="#00bfff"/>
<path d="M503,544h2v1h-2zM714,544h22v1h-22zM872,544h3v1h-3zM91,681h1v1h-1zM263,681h1v1h-1zM26,603h1v1h-1zM438,603h2v1h-2zM1127,603h13v1h-13zM1228,603h3v1h-3zM46,629h1v1h-1zM370,629h12v1h-12zM477,567h1v1h-1zM919,567h1v1h-1zM1344,567h2v1h-2zM1370,567h5v1h-5zM93,683h1v1h-1zM261,683h1v1h-1zM515,535h1v1h-1zM684,535h2v1h-2zM780,535h16v1h-16zM818,535h28v1h-28zM3,588h1v1h-1zM455,588h1v1h-1zM1055,588h4v1h-4zM1272,588h3v1h-3zM572,505h10v1h-10zM587,505h5v1h-5zM610,505h4v1h-4zM34,615h1v1h-1zM417,615h2v1h-2zM1164,615h2v1h-2zM1175,615h17v1h-17zM54,638h1v1h-1zM339,638h3v1h-3zM7,591h2v1h-2zM452,591h1v1h-1zM1097,591h4v1h-4zM1264,591h3v1h-3zM35,616h1v1h-1zM416,616h1v1h-1zM1166,616h9v1h-9zM13,595h2v1h-2zM448,595h1v1h-1zM1111,595h2v1h-2zM1253,595h3v1h-3zM557,508h6v1h-6zM621,508h2v1h-2zM16,597h2v1h-2zM445,597h1v1h-1zM1115,597h2v1h-2zM1247,597h3v1h-3zM68,654h1v1h-1zM296,654h2v1h-2zM82,670h1v1h-1zM273,670h1v1h-1zM511,538h1v1h-1zM690,538h2v1h-2zM768,538h4v1h-4zM853,538h3v1h-3zM49,633h1v1h-1zM352,633h2v1h-2zM44,627h1v1h-1zM391,627h2v1h-2zM459,584h1v1h-1zM945,584h10v1h-10zM963,584h6v1h-6zM994,584h5v1h-5zM1031,584h10v1h-10zM1283,584h3v1h-3zM71,657h1v1h-1zM291,657h2v1h-2zM50,634h1v1h-1zM349,634h3v1h-3zM21,600h2v1h-2zM442,600h1v1h-1zM1121,600h2v1h-2zM1237,600h3v1h-3zM479,565h1v1h-1zM916,565h2v1h-2zM1349,565h17v1h-17zM10,593h2v1h-2zM450,593h1v1h-1zM1106,593h3v1h-3zM1259,593h2v1h-2zM528,523h1v1h-1zM659,523h2v1h-2zM507,541h2v1h-2zM696,541h4v1h-4zM753,541h7v1h-7zM863,541h3v1h-3zM0,586h1v1h-1zM457,586h1v1h-1zM975,586h15v1h-15zM1045,586h5v1h-5zM1278,586h3v1h-3zM458,585h1v1h-1zM955,585h8v1h-8zM969,585h6v1h-6zM990,585h4v1h-4zM1041,585h4v1h-4zM1281,585h2v1h-2zM506,542h1v1h-1zM700,542h8v1h-8zM744,542h9v1h-9zM866,542h3v1h-3zM476,568h1v1h-1zM920,568h1v1h-1zM1339,568h5v1h-5zM1375,568h6v1h-6zM37,619h1v1h-1zM406,619h4v1h-4zM460,583h1v1h-1zM940,583h5v1h-5zM999,583h6v1h-6zM1016,583h15v1h-15zM1286,583h6v1h-6zM130,718h2v1h-2zM214,718h1v1h-1zM1,587h2v1h-2zM456,587h1v1h-1zM1050,587h5v1h-5zM1275,587h3v1h-3zM502,545h1v1h-1zM875,545h3v1h-3zM175,733h12v1h-12zM535,517h1v1h-1zM645,517h3v1h-3zM133,720h1v1h-1zM210,720h2v1h-2zM31,610h1v1h-1zM424,610h2v1h-2zM1152,610h2v1h-2zM1209,610h2v1h-2zM30,609h1v1h-1zM426,609h2v1h-2zM1150,609h2v1h-2zM1211,609h3v1h-3zM34,614h1v1h-1zM419,614h1v1h-1zM1161,614h3v1h-3zM1192,614h5v1h-5zM47,631h1v1h-1zM356,631h6v1h-6zM467,576h1v1h-1zM930,576h1v1h-1zM1315,576h2v1h-2zM1414,576h7v1h-7zM32,611h1v1h-1zM423,611h1v1h-1zM1154,611h2v1h-2zM1206,611h3v1h-3zM45,628h1v1h-1zM382,628h9v1h-9zM60,645h1v1h-1zM317,645h3v1h-3zM465,578h1v1h-1zM932,578h2v1h-2zM1309,578h4v1h-4zM1429,578h8v1h-8zM33,613h1v1h-1zM420,613h1v1h-1zM1159,613h2v1h-2zM1197,613h5v1h-5zM23,601h2v1h-2zM441,601h1v1h-1zM1123,601h2v1h-2zM1234,601h3v1h-3zM543,512h2v1h-2zM631,512h3v1h-3zM165,730h3v1h-3zM193,730h2v1h-2zM498,548h2v1h-2zM884,548h3v1h-3zM15,596h1v1h-1zM446,596h2v1h-2zM1113,596h2v1h-2zM1250,596h3v1h-3zM505,543h1v1h-1zM708,543h6v1h-6zM736,543h8v1h-8zM869,543h3v1h-3zM497,549h1v1h-1zM887,549h3v1h-3zM79,666h1v1h-1zM278,666h2v1h-2zM114,704h1v1h-1zM235,704h2v1h-2zM472,572h1v1h-1zM925,572h1v1h-1zM1323,572h2v1h-2zM1398,572h4v1h-4zM501,546h1v1h-1zM878,546h3v1h-3zM510,539h1v1h-1zM692,539h2v1h-2zM764,539h4v1h-4zM856,539h3v1h-3zM478,566h1v1h-1zM918,566h1v1h-1zM1346,566h3v1h-3zM1366,566h4v1h-4zM518,532h1v1h-1zM678,532h2v1h-2zM523,528h1v1h-1zM670,528h2v1h-2zM466,577h1v1h-1zM931,577h1v1h-1zM1313,577h2v1h-2zM1421,577h8v1h-8zM73,659h1v1h-1zM288,659h2v1h-2zM52,636h1v1h-1zM345,636h2v1h-2zM73,660h1v1h-1zM287,660h1v1h-1zM108,698h1v1h-1zM244,698h1v1h-1zM129,717h1v1h-1zM215,717h2v1h-2zM545,511h2v1h-2zM629,511h2v1h-2zM26,604h1v1h-1zM436,604h2v1h-2zM1140,604h2v1h-2zM1225,604h3v1h-3zM65,650h1v1h-1zM304,650h2v1h-2zM464,579h1v1h-1zM934,579h1v1h-1zM1305,579h4v1h-4zM1437,579h10v1h-10zM19,599h2v1h-2zM443,599h1v1h-1zM1119,599h2v1h-2zM1240,599h4v1h-4zM513,536h2v1h-2zM686,536h2v1h-2zM776,536h4v1h-4zM796,536h8v1h-8zM812,536h6v1h-6zM846,536h3v1h-3zM29,607h1v1h-1zM430,607h2v1h-2zM1146,607h2v1h-2zM1217,607h3v1h-3zM517,533h1v1h-1zM680,533h2v1h-2zM139,724h2v1h-2zM203,724h2v1h-2zM101,692h1v1h-1zM251,692h2v1h-2zM43,626h1v1h-1zM393,626h1v1h-1zM473,571h1v1h-1zM924,571h1v1h-1zM1325,571h2v1h-2zM1393,571h5v1h-5zM468,575h1v1h-1zM929,575h1v1h-1zM1317,575h2v1h-2zM1410,575h4v1h-4zM91,680h1v1h-1zM264,680h1v1h-1zM547,510h4v1h-4zM626,510h3v1h-3zM124,713h1v1h-1zM222,713h2v1h-2zM461,582h1v1h-1zM938,582h2v1h-2zM1005,582h11v1h-11zM1292,582h6v1h-6zM27,605h1v1h-1zM434,605h2v1h-2zM1142,605h2v1h-2zM1222,605h3v1h-3zM563,507h4v1h-4zM618,507h3v1h-3zM29,608h1v1h-1zM428,608h2v1h-2zM1148,608h2v1h-2zM1214,608h3v1h-3zM567,506h5v1h-5zM582,506h5v1h-5zM614,506h4v1h-4zM4,589h2v1h-2zM454,589h1v1h-1zM1059,589h33v1h-33zM1270,589h2v1h-2zM100,691h1v1h-1zM253,691h1v1h-1zM6,590h1v1h-1zM453,590h1v1h-1zM1092,590h5v1h-5zM1267,590h3v1h-3zM161,729h4v1h-4zM195,729h2v1h-2zM75,662h1v1h-1zM284,662h1v1h-1zM483,561h1v1h-1zM911,561h1v1h-1zM89,678h1v1h-1zM265,678h1v1h-1zM28,606h1v1h-1zM432,606h2v1h-2zM1144,606h2v1h-2zM1220,606h2v1h-2zM112,702h1v1h-1zM238,702h2v1h-2zM536,516h1v1h-1zM642,516h3v1h-3zM69,655h1v1h-1zM294,655h2v1h-2zM596,503h7v1h-7zM9,592h1v1h-1zM451,592h1v1h-1zM1101,592h5v1h-5zM1261,592h3v1h-3zM46,630h1v1h-1zM362,630h8v1h-8zM527,524h1v1h-1zM661,524h3v1h-3zM532,520h1v1h-1zM652,520h3v1h-3zM551,509h6v1h-6zM623,509h3v1h-3zM37,618h1v1h-1zM410,618h4v1h-4zM61,646h1v1h-1zM315,646h2v1h-2zM492,553h1v1h-1zM899,553h2v1h-2zM97,688h1v1h-1zM256,688h1v1h-1zM39,622h1v1h-1zM399,622h2v1h-2zM526,525h1v1h-1zM664,525h2v1h-2zM530,521h2v1h-2zM655,521h2v1h-2zM56,641h1v1h-1zM329,641h3v1h-3zM125,714h2v1h-2zM221,714h1v1h-1zM78,665h1v1h-1zM280,665h1v1h-1zM491,554h1v1h-1zM901,554h2v1h-2zM128,716h1v1h-1zM217,716h2v1h-2zM64,649h1v1h-1zM306,649h3v1h-3zM470,573h2v1h-2zM926,573h1v1h-1zM1321,573h2v1h-2zM1402,573h4v1h-4zM146,726h7v1h-7zM200,726h2v1h-2zM48,632h1v1h-1zM354,632h2v1h-2zM512,537h1v1h-1zM688,537h2v1h-2zM772,537h4v1h-4zM804,537h8v1h-8zM849,537h4v1h-4zM95,685h1v1h-1zM259,685h1v1h-1zM74,661h1v1h-1zM285,661h2v1h-2zM522,529h1v1h-1zM672,529h2v1h-2zM109,699h1v1h-1zM242,699h2v1h-2zM96,686h1v1h-1zM258,686h1v1h-1zM136,722h1v1h-1zM207,722h1v1h-1zM475,569h1v1h-1zM921,569h2v1h-2zM1332,569h7v1h-7zM1381,569h6v1h-6zM500,547h1v1h-1zM881,547h3v1h-3zM55,639h1v1h-1zM335,639h4v1h-4zM117,707h1v1h-1zM231,707h1v1h-1zM474,570h1v1h-1zM923,570h1v1h-1zM1327,570h5v1h-5zM1387,570h6v1h-6zM102,693h1v1h-1zM250,693h1v1h-1zM529,522h1v1h-1zM657,522h2v1h-2zM58,643h1v1h-1zM323,643h3v1h-3zM84,672h1v1h-1zM271,672h1v1h-1zM80,667h1v1h-1zM277,667h1v1h-1zM489,556h1v1h-1zM904,556h1v1h-1zM520,530h2v1h-2zM674,530h2v1h-2zM38,620h1v1h-1zM403,620h3v1h-3zM18,598h1v1h-1zM444,598h1v1h-1zM1117,598h2v1h-2zM1244,598h3v1h-3zM519,531h1v1h-1zM676,531h2v1h-2zM57,642h1v1h-1zM326,642h3v1h-3zM524,527h1v1h-1zM668,527h2v1h-2zM153,727h5v1h-5zM199,727h1v1h-1zM72,658h1v1h-1zM290,658h1v1h-1zM168,731h3v1h-3zM190,731h3v1h-3zM12,594h1v1h-1zM449,594h1v1h-1zM1109,594h2v1h-2zM1256,594h3v1h-3zM41,624h1v1h-1zM396,624h1v1h-1zM32,612h1v1h-1zM421,612h2v1h-2zM1156,612h3v1h-3zM1202,612h4v1h-4zM56,640h1v1h-1zM332,640h3v1h-3zM462,581h1v1h-1zM937,581h1v1h-1zM1298,581h4v1h-4zM1455,581h2v1h-2zM107,697h1v1h-1zM245,697h1v1h-1zM481,563h1v1h-1zM914,563h1v1h-1zM62,647h1v1h-1zM312,647h3v1h-3zM103,694h2v1h-2zM249,694h1v1h-1zM105,695h1v1h-1zM247,695h2v1h-2zM25,602h1v1h-1zM440,602h1v1h-1zM1125,602h2v1h-2zM1231,602h3v1h-3zM539,514h2v1h-2zM637,514h3v1h-3zM40,623h1v1h-1zM397,623h2v1h-2zM65,651h1v1h-1zM302,651h2v1h-2zM141,725h5v1h-5zM202,725h1v1h-1zM484,560h2v1h-2zM909,560h2v1h-2zM51,635h1v1h-1zM347,635h2v1h-2zM127,715h1v1h-1zM219,715h2v1h-2zM36,617h1v1h-1zM414,617h2v1h-2zM534,518h1v1h-1zM648,518h2v1h-2zM509,540h1v1h-1zM694,540h2v1h-2zM760,540h4v1h-4zM859,540h4v1h-4zM99,690h1v1h-1zM254,690h1v1h-1zM537,515h2v1h-2zM640,515h2v1h-2zM525,526h1v1h-1zM666,526h2v1h-2zM119,709h2v1h-2zM228,709h2v1h-2zM533,519h1v1h-1zM650,519h2v1h-2zM59,644h1v1h-1zM320,644h3v1h-3zM493,552h1v1h-1zM896,552h3v1h-3zM463,580h1v1h-1zM935,580h2v1h-2zM1302,580h3v1h-3zM1447,580h8v1h-8zM106,696h1v1h-1zM246,696h1v1h-1zM132,719h1v1h-1zM212,719h2v1h-2zM134,721h2v1h-2zM208,721h2v1h-2zM490,555h1v1h-1zM903,555h1v1h-1zM85,673h1v1h-1zM270,673h1v1h-1zM70,656h1v1h-1zM293,656h1v1h-1zM592,504h4v1h-4zM603,504h7v1h-7zM76,663h1v1h-1zM283,663h1v1h-1zM77,664h1v1h-1zM281,664h2v1h-2zM113,703h1v1h-1zM237,703h1v1h-1zM92,682h1v1h-1zM262,682h1v1h-1zM115,705h1v1h-1zM234,705h1v1h-1zM487,558h1v1h-1zM907,558h1v1h-1zM42,625h1v1h-1zM394,625h2v1h-2zM469,574h1v1h-1zM927,574h2v1h-2zM1319,574h2v1h-2zM1406,574h4v1h-4zM171,732h4v1h-4zM187,732h3v1h-3zM53,637h1v1h-1zM342,637h3v1h-3zM541,513h2v1h-2zM634,513h3v1h-3zM494,551h2v1h-2zM893,551h3v1h-3zM122,711h1v1h-1zM225,711h2v1h-2zM480,564h1v1h-1zM915,564h1v1h-1zM96,687h1v1h-1zM257,687h1v1h-1zM90,679h1v1h-1zM264,679h1v1h-1zM39,621h1v1h-1zM401,621h2v1h-2zM137,723h2v1h-2zM205,723h2v1h-2zM121,710h1v1h-1zM227,710h1v1h-1zM80,668h1v1h-1zM275,668h2v1h-2zM81,669h1v1h-1zM274,669h1v1h-1zM86,674h1v1h-1zM269,674h1v1h-1zM496,550h1v1h-1zM890,550h3v1h-3zM98,689h1v1h-1zM255,689h1v1h-1zM66,652h1v1h-1zM300,652h2v1h-2zM110,700h1v1h-1zM241,700h1v1h-1zM63,648h1v1h-1zM309,648h3v1h-3zM158,728h3v1h-3zM197,728h2v1h-2zM111,701h1v1h-1zM240,701h1v1h-1zM488,557h1v1h-1zM905,557h2v1h-2zM123,712h1v1h-1zM224,712h1v1h-1zM116,706h1v1h-1zM232,706h2v1h-2zM83,671h1v1h-1zM272,671h1v1h-1zM87,676h1v1h-1zM267,676h1v1h-1zM482,562h1v1h-1zM912,562h2v1h-2zM67,653h1v1h-1zM298,653h2v1h-2zM486,559h1v1h-1zM908,559h1v1h-1zM88,677h1v1h-1zM266,677h1v1h-1zM118,708h1v1h-1zM230,708h1v1h-1zM86,675h1v1h-1zM268,675h1v1h-1zM94,684h1v1h-1zM260,684h1v1h-1zM516,534h1v1h-1zM682,534h2v1h-2z" fill="#ff0000"/>
<rect x="0" y="435" width="1845" height="1" fill="#ffff00"/>
<rect x="0" y="614" width="1845" height="1" fill="#ffa500"/>
<rect x="0" y="638" width="1845" height="1" fill="#3cb371"/>
</g>
<rect x="0" y="415" width="1846" height="1" fill="#fff"/>
<rect x="0" y="805" width="1846" height="1" fill="#fff"/>
<rect x="1845" y="415" width="1" height="391" fill="#fff"/>
<rect x="1844" y="461" width="3" height="45" fill="#fff"/>
<rect x="0" y="806" width="1" height="3" fill="#fff"/>
<rect x="96" y="806" width="1" height="3" fill="#fff"/>
<rect x="192" y="806" width="1" height="3" fill="#fff"/>
<rect x="288" y="806" width="1" height="3" fill="#fff"/>
<rect x="384" y="806" width="1" height="3" fill="#fff"/>
<rect x="480" y="806" width="1" height="3" fill="#fff"/>
<rect x="576" y="806" width="1" height="3" fill="#fff"/>
<rect x="672" y="806" width="1" height="3" fill="#fff"/>
<rect x="768" y="806" width="1" height="3" fill="#fff"/>
<rect x="864" y="806" width="1" height="3" fill="#fff"/>
<rect x="960" y="806" width="1" height="3" fill="#fff"/>
<rect x="1056" y="806" width="1" height="3" fill="#fff"/>
<rect x="1152" y="806" width="1" height="3" fill="#fff"/>
<rect x="1248" y="806" width="1" height="3" fill="#fff"/>
<rect x="1344" y="806" width="1" height="3" fill="#fff"/>
<rect x="1440" y="806" width="1" height="3" fill="#fff"/>
<rect x="1846" y="443" width="2" height="1" fill="#fff"/>
<rect x="1846" y="492" width="2" height="1" fill="#fff"/>
<rect x="1846" y="541" width="2" height="1" fill="#fff"/>
<rect x="1846" y="590" width="2" height="1" fill="#fff"/>
<rect x="1846" y="639" width="2" height="1" fill="#fff"/>
<rect x="1846" y="688" width="2" height="1" fill="#fff"/>
<rect x="1846" y="737" width="2" height="1" fill="#fff"/>
<rect x="1846" y="786" width="2" height="1" fill="#fff"/>
<rect x="0" y="829" width="1908" height="2" fill="#ffffff"/>
<rect x="0" y="831" width="1908" height="34" fill="#ababab"/>
<rect x="0" y="865" width="1908" height="1" fill="#e8e8e8"/>
<rect x="3" y="3" width="9" height="1" fill="#fff"/>
<rect x="4" y="4" width="7" height="1" fill="#fff"/>
<rect x="5" y="5" width="5" height="1" fill="#fff"/>
<rect x="6" y="6" width="3" height="1" fill="#fff"/>
<rect x="7" y="7" width="1" height="1" fill="#fff"/>
<rect x="3" y="423" width="9" height="1" fill="#fff"/>
<rect x="4" y="424" width="7" height="1" fill="#fff"/>
<rect x="5" y="425" width="5" height="1" fill="#fff"/>
<rect x="6" y="426" width="3" height="1" fill="#fff"/>
<rect x="7" y="427" width="1" height="1" fill="#fff"/>
<rect x="0" y="416" width="2" height="1" fill="#0a8a0a"/><rect x="1" y="417" width="1" height="1" fill="#4ab4f0"/>
</svg>
<div class="t" style="left:18px;top:-2px;color:#fff;"><span style="left:0px;letter-spacing:-0.74px">GBPUSD.raw,H4</span><span style="left:96px;letter-spacing:-0.04px">1.36291</span><span style="left:146px;letter-spacing:-0.04px">1.36310</span><span style="left:196px;letter-spacing:-0.04px">1.36221</span><span style="left:246px;letter-spacing:-0.04px">1.36245</span></div>
<div class="t" style="left:18px;top:418px;color:#fff;"><span style="left:0px;letter-spacing:-0.74px">GBPUSD.raw,H1</span><span style="left:96px;letter-spacing:-0.04px">1.36273</span><span style="left:146px;letter-spacing:-0.04px">1.36291</span><span style="left:196px;letter-spacing:-0.04px">1.36235</span><span style="left:246px;letter-spacing:-0.04px">1.36245</span></div>
<div class="t" style="left:-1px;top:389px;color:#fff;"><span style="left:0px;letter-spacing:-0.01px">5</span><span style="left:11px;letter-spacing:-0.77px">Jan</span><span style="left:34px;letter-spacing:-0.01px">2026</span></div>
<div class="t" style="left:95px;top:389px;color:#fff;"><span style="left:0px;letter-spacing:-0.01px">7</span><span style="left:11px;letter-spacing:-0.77px">Jan</span><span style="left:34px;letter-spacing:-0.01px">12:00</span></div>
<div class="t" style="left:191px;top:389px;color:#fff;"><span style="left:0px;letter-spacing:-0.01px">9</span><span style="left:11px;letter-spacing:-0.77px">Jan</span><span style="left:34px;letter-spacing:-0.01px">12:00</span></div>
<div class="t" style="left:287px;top:389px;color:#fff;"><span style="left:0px;letter-spacing:-0.01px">13</span><span style="left:18px;letter-spacing:-0.77px">Jan</span><span style="left:41px;letter-spacing:-0.01px">12:00</span></div>
<div class="t" style="left:383px;top:389px;color:#fff;"><span style="left:0px;letter-spacing:-0.01px">15</span><span style="left:18px;letter-spacing:-0.77px">Jan</span><span style="left:41px;letter-spacing:-0.01px">12:00</span></div>
<div class="t" style="left:479px;top:389px;color:#fff;"><span style="left:0px;letter-spacing:-0.01px">19</span><span style="left:18px;letter-spacing:-0.77px">Jan</span><span style="left:41px;letter-spacing:-0.01px">12:00</span></div>
<div class="t" style="left:575px;top:389px;color:#fff;"><span style="left:0px;letter-spacing:-0.01px">21</span><span style="left:18px;letter-spacing:-0.77px">Jan</span><span style="left:41px;letter-spacing:-0.01px">12:00</span></div>
<div class="t" style="left:671px;top:389px;color:#fff;"><span style="left:0px;letter-spacing:-0.01px">23</span><span style="left:18px;letter-spacing:-0.77px">Jan</span><span style="left:41px;letter-spacing:-0.01px">12:00</span></div>
<div class="t" style="left:767px;top:389px;color:#fff;"><span style="left:0px;letter-spacing:-0.01px">27</span><span style="left:18px;letter-spacing:-0.77px">Jan</span><span style="left:41px;letter-spacing:-0.01px">12:00</span></div>
<div class="t" style="left:863px;top:389px;color:#fff;"><span style="left:0px;letter-spacing:-0.01px">29</span><span style="left:18px;letter-spacing:-0.77px">Jan</span><span style="left:41px;letter-spacing:-0.01px">12:00</span></div>
<div class="t" style="left:959px;top:389px;color:#fff;"><span style="left:0px;letter-spacing:-0.01px">2</span><span style="left:11px;letter-spacing:-0.90px">Feb</span><span style="left:35px;letter-spacing:-0.01px">12:00</span></div>
<div class="t" style="left:1055px;top:389px;color:#fff;"><span style="left:0px;letter-spacing:-0.01px">4</span><span style="left:11px;letter-spacing:-0.90px">Feb</span><span style="left:35px;letter-spacing:-0.01px">12:00</span></div>
<div class="t" style="left:1151px;top:389px;color:#fff;"><span style="left:0px;letter-spacing:-0.01px">6</span><span style="left:11px;letter-spacing:-0.90px">Feb</span><span style="left:35px;letter-spacing:-0.01px">12:00</span></div>
<div class="t" style="left:1247px;top:389px;color:#fff;"><span style="left:0px;letter-spacing:-0.01px">10</span><span style="left:18px;letter-spacing:-0.90px">Feb</span><span style="left:42px;letter-spacing:-0.01px">12:00</span></div>
<div class="t" style="left:1343px;top:389px;color:#fff;"><span style="left:0px;letter-spacing:-0.01px">12</span><span style="left:18px;letter-spacing:-0.90px">Feb</span><span style="left:42px;letter-spacing:-0.01px">12:00</span></div>
<div class="t" style="left:1439px;top:389px;color:#fff;"><span style="left:0px;letter-spacing:-0.01px">16</span><span style="left:18px;letter-spacing:-0.90px">Feb</span><span style="left:42px;letter-spacing:-0.01px">12:00</span></div>
<div class="t" style="left:-1px;top:809px;color:#fff;"><span style="left:0px;letter-spacing:-0.01px">5</span><span style="left:11px;letter-spacing:-0.90px">Feb</span><span style="left:35px;letter-spacing:-0.01px">2026</span></div>
<div class="t" style="left:95px;top:809px;color:#fff;"><span style="left:0px;letter-spacing:-0.01px">6</span><span style="left:11px;letter-spacing:-0.90px">Feb</span><span style="left:35px;letter-spacing:0.09px">00:00</span></div>
<div class="t" style="left:191px;top:809px;color:#fff;"><span style="left:0px;letter-spacing:-0.01px">6</span><span style="left:11px;letter-spacing:-0.90px">Feb</span><span style="left:35px;letter-spacing:-0.01px">12:00</span></div>
<div class="t" style="left:287px;top:809px;color:#fff;"><span style="left:0px;letter-spacing:-0.01px">9</span><span style="left:11px;letter-spacing:-0.90px">Feb</span><span style="left:35px;letter-spacing:0.09px">00:00</span></div>
<div class="t" style="left:383px;top:809px;color:#fff;"><span style="left:0px;letter-spacing:-0.01px">9</span><span style="left:11px;letter-spacing:-0.90px">Feb</span><span style="left:35px;letter-spacing:-0.01px">12:00</span></div>
<div class="t" style="left:479px;top:809px;color:#fff;"><span style="left:0px;letter-spacing:-0.01px">10</span><span style="left:18px;letter-spacing:-0.90px">Feb</span><span style="left:42px;letter-spacing:0.09px">00:00</span></div>
<div class="t" style="left:575px;top:809px;color:#fff;"><span style="left:0px;letter-spacing:-0.01px">10</span><span style="left:18px;letter-spacing:-0.90px">Feb</span><span style="left:42px;letter-spacing:-0.01px">12:00</span></div>
<div class="t" style="left:671px;top:809px;color:#fff;"><span style="left:0px;letter-spacing:-0.01px">11</span><span style="left:18px;letter-spacing:-0.90px">Feb</span><span style="left:42px;letter-spacing:0.09px">00:00</span></div>
<div class="t" style="left:767px;top:809px;color:#fff;"><span style="left:0px;letter-spacing:-0.01px">11</span><span style="left:18px;letter-spacing:-0.90px">Feb</span><span style="left:42px;letter-spacing:-0.01px">12:00</span></div>
<div class="t" style="left:863px;top:809px;color:#fff;"><span style="left:0px;letter-spacing:-0.01px">12</span><span style="left:18px;letter-spacing:-0.90px">Feb</span><span style="left:42px;letter-spacing:0.09px">00:00</span></div>
<div class="t" style="left:959px;top:809px;color:#fff;"><span style="left:0px;letter-spacing:-0.01px">12</span><span style="left:18px;letter-spacing:-0.90px">Feb</span><span style="left:42px;letter-spacing:-0.01px">12:00</span></div>
<div class="t" style="left:1055px;top:809px;color:#fff;"><span style="left:0px;letter-spacing:-0.01px">13</span><span style="left:18px;letter-spacing:-0.90px">Feb</span><span style="left:42px;letter-spacing:0.09px">00:00</span></div>
<div class="t" style="left:1151px;top:809px;color:#fff;"><span style="left:0px;letter-spacing:-0.01px">13</span><span style="left:18px;letter-spacing:-0.90px">Feb</span><span style="left:42px;letter-spacing:-0.01px">12:00</span></div>
<div class="t" style="left:1247px;top:809px;color:#fff;"><span style="left:0px;letter-spacing:-0.01px">16</span><span style="left:18px;letter-spacing:-0.90px">Feb</span><span style="left:42px;letter-spacing:0.09px">00:00</span></div>
<div class="t" style="left:1343px;top:809px;color:#fff;"><span style="left:0px;letter-spacing:-0.01px">16</span><span style="left:18px;letter-spacing:-0.90px">Feb</span><span style="left:42px;letter-spacing:-0.01px">12:00</span></div>
<div class="t" style="left:1439px;top:809px;color:#fff;"><span style="left:0px;letter-spacing:-0.01px">17</span><span style="left:18px;letter-spacing:-0.90px">Feb</span><span style="left:42px;letter-spacing:0.09px">00:00</span></div>
<div class="t" style="left:1851.4px;top:16px;color:#fff;"><span style="left:1px;letter-spacing:-0.04px">1.38835</span></div>
<div class="t" style="left:1851.4px;top:65px;color:#fff;"><span style="left:1px;letter-spacing:-0.04px">1.38235</span></div>
<div class="t" style="left:1851.4px;top:114px;color:#fff;"><span style="left:1px;letter-spacing:-0.04px">1.37635</span></div>
<div class="t" style="left:1851.4px;top:163px;color:#fff;"><span style="left:1px;letter-spacing:-0.04px">1.37025</span></div>
<div class="t" style="left:1851.4px;top:212px;color:#fff;"><span style="left:1px;letter-spacing:-0.04px">1.36425</span></div>
<div class="t" style="left:1851.4px;top:261px;color:#fff;"><span style="left:1px;letter-spacing:-0.04px">1.35815</span></div>
<div class="t" style="left:1851.4px;top:310px;color:#fff;"><span style="left:1px;letter-spacing:-0.04px">1.35215</span></div>
<div class="t" style="left:1851.4px;top:359px;color:#fff;"><span style="left:1px;letter-spacing:-0.04px">1.34615</span></div>
<div class="t" style="left:1851.4px;top:436px;color:#fff;"><span style="left:1px;letter-spacing:-0.04px">1.37162</span></div>
<div class="t" style="left:1851.4px;top:485px;color:#fff;"><span style="left:1px;letter-spacing:-0.04px">1.36877</span></div>
<div class="t" style="left:1851.4px;top:534px;color:#fff;"><span style="left:1px;letter-spacing:-0.04px">1.36592</span></div>
<div class="t" style="left:1851.4px;top:583px;color:#fff;"><span style="left:1px;letter-spacing:-0.04px">1.36307</span></div>
<div class="t" style="left:1851.4px;top:681px;color:#fff;"><span style="left:1px;letter-spacing:-0.04px">1.35737</span></div>
<div class="t" style="left:1851.4px;top:730px;color:#fff;"><span style="left:1px;letter-spacing:-0.04px">1.35452</span></div>
<div class="t" style="left:1851.4px;top:779px;color:#fff;"><span style="left:1px;letter-spacing:-0.04px">1.35167</span></div>
<div class="b" style="top:149px;height:14px;background:#ffff00"></div>
<div class="t" style="left:1851.4px;top:149px;color:#000;"><span style="left:1px;letter-spacing:-0.04px">1.37208</span></div>
<div class="b" style="top:227px;height:14px;background:#ffffff"></div>
<div class="t" style="left:1851.4px;top:227px;color:#000;"><span style="left:1px;letter-spacing:-0.04px">1.36245</span></div>
<div class="b" style="top:234px;height:14px;background:#ffa500"></div>
<div class="t" style="left:1851.4px;top:234px;color:#000;"><span style="left:1px;letter-spacing:-0.04px">1.36171</span></div>
<div class="b" style="top:327px;height:14px;background:#0000ff"></div>
<div class="t" style="left:1851.4px;top:327px;color:#0b0a2c;"><span style="left:1px;letter-spacing:-0.04px">1.35015</span></div>
<div class="b" style="top:429px;height:14px;background:#ffff00"></div>
<div class="t" style="left:1851.4px;top:429px;color:#000;"><span style="left:1px;letter-spacing:-0.04px">1.37208</span></div>
<div class="b" style="top:594px;height:14px;background:#ffffff"></div>
<div class="t" style="left:1851.4px;top:594px;color:#000;"><span style="left:1px;letter-spacing:-0.04px">1.36245</span></div>
<div class="b" style="top:608px;height:14px;background:#ffa500"></div>
<div class="t" style="left:1851.4px;top:608px;color:#000;"><span style="left:1px;letter-spacing:-0.04px">1.36171</span></div>
<div class="b" style="top:632px;height:14px;background:#3cb371"></div>
<div class="t" style="left:1851.4px;top:632px;color:#000;"><span style="left:1px;letter-spacing:-0.04px">1.36028</span></div>
<svg width="1908" height="866" viewBox="0 0 1908 866" style="position:absolute;left:0;top:0">
<g transform="translate(1730.2,171.7)">
<circle r="21.2" fill="#000"/>
<path d="M-7.4,-14.9 L7.5,-14.9 L12.1,-2.4 C7,3 5,9 3.8,15.6 L1.0,15.6 L1.0,1.2 A4.15,4.15 0 1 0 -1.2,1.2 L-1.2,15.6 L-3.6,15.6 C-5,9 -7,3 -12.3,-2.4 Z" fill="#fff"/>
</g>
<rect x="1752" y="279" width="149.5" height="37" fill="#6c6c6c"/>
<rect x="1826" y="279" width="1" height="37" fill="#5c5c66"/>
<g transform="translate(1770,299.5)"><rect x="-3.7" y="-15.8" width="7.4" height="4" rx="1.2" fill="#2b2b2b"/><rect x="-2.3" y="-14.7" width="4.6" height="1.8" rx="0.4" fill="#d6d6d6"/><rect x="-0.8" y="-12" width="1.6" height="1.6" fill="#2b2b2b"/><line x1="-8" y1="-8" x2="-9.8" y2="-9.8" stroke="#2b2b2b" stroke-width="1.1"/><line x1="-11" y1="-8.8" x2="-8.8" y2="-11.2" stroke="#2b2b2b" stroke-width="1.1"/><circle r="10.7" fill="#d4d4d4" stroke="#2b2b2b" stroke-width="1.1"/><circle r="8.399999999999999" fill="#e2e2e2" stroke="#2b2b2b" stroke-width="1.1"/></g>
<path d="M1770.4,293.2 L1776.2,296.9 L1770,299.9 Z" fill="#2d2d2d"/>
<circle cx="1769.5" cy="299.8" r="1.6" fill="#2d2d2d"/>
<circle cx="1781.8" cy="286.5" r="4.85" fill="#2a2a2a"/>
<g transform="translate(1807.5,299.5)"><rect x="-3.7" y="-15.8" width="7.4" height="4" rx="1.2" fill="#2b2b2b"/><rect x="-2.3" y="-14.7" width="4.6" height="1.8" rx="0.4" fill="#d6d6d6"/><rect x="-0.8" y="-12" width="1.6" height="1.6" fill="#2b2b2b"/><line x1="-8" y1="-8" x2="-9.8" y2="-9.8" stroke="#2b2b2b" stroke-width="1.1"/><line x1="-11" y1="-8.8" x2="-8.8" y2="-11.2" stroke="#2b2b2b" stroke-width="1.1"/><circle r="10.7" fill="#d4d4d4" stroke="#2b2b2b" stroke-width="1.1"/><circle r="8.399999999999999" fill="#e2e2e2" stroke="#2b2b2b" stroke-width="1.1"/></g>
<path d="M1807.5,299.5 L1808.06,293.12 A6.4,6.4 0 0 1 1808.06,305.88 Z" fill="#2d2d2d"/>
<circle cx="1807.0" cy="299.8" r="1.6" fill="#2d2d2d"/>
<circle cx="1819.3" cy="286.5" r="4.85" fill="#2a2a2a"/>
<g transform="translate(1845.1,299.5)"><rect x="-3.7" y="-15.8" width="7.4" height="4" rx="1.2" fill="#2b2b2b"/><rect x="-2.3" y="-14.7" width="4.6" height="1.8" rx="0.4" fill="#d6d6d6"/><rect x="-0.8" y="-12" width="1.6" height="1.6" fill="#2b2b2b"/><line x1="-8" y1="-8" x2="-9.8" y2="-9.8" stroke="#2b2b2b" stroke-width="1.1"/><line x1="-11" y1="-8.8" x2="-8.8" y2="-11.2" stroke="#2b2b2b" stroke-width="1.1"/><circle r="10.7" fill="#d4d4d4" stroke="#2b2b2b" stroke-width="1.1"/><circle r="8.399999999999999" fill="#e2e2e2" stroke="#2b2b2b" stroke-width="1.1"/></g>
<path d="M1845.1,299.5 L1846.21,293.20 A6.4,6.4 0 1 1 1838.92,301.16 Z" fill="#2d2d2d"/>
<circle cx="1844.6" cy="299.8" r="1.6" fill="#e2e2e2"/>
<circle cx="1856.8999999999999" cy="286.5" r="4.85" fill="#2a2a2a"/>
<g transform="translate(1882.6,299.5)"><rect x="-3.7" y="-15.8" width="7.4" height="4" rx="1.2" fill="#2b2b2b"/><rect x="-2.3" y="-14.7" width="4.6" height="1.8" rx="0.4" fill="#d6d6d6"/><rect x="-0.8" y="-12" width="1.6" height="1.6" fill="#2b2b2b"/><line x1="-8" y1="-8" x2="-9.8" y2="-9.8" stroke="#2b2b2b" stroke-width="1.1"/><line x1="-11" y1="-8.8" x2="-8.8" y2="-11.2" stroke="#2b2b2b" stroke-width="1.1"/><circle r="10.7" fill="#d4d4d4" stroke="#2b2b2b" stroke-width="1.1"/><circle r="8.399999999999999" fill="#2d2d2d" stroke="#2b2b2b" stroke-width="1.1"/></g>
<circle cx="1882.6" cy="299.5" r="3" fill="none" stroke="#9a9a9a" stroke-width="1.1"/>
<rect x="1881.8999999999999" y="294.0" width="1.4" height="4.5" fill="#9a9a9a"/>
<circle cx="1894.3999999999999" cy="286.5" r="4.85" fill="#2a2a2a"/>
<rect x="1709" y="201" width="42.5" height="530.5" fill="#ffffff"/>
<rect x="1711" y="204" width="38" height="37.3" fill="#31c1ed"/>
<rect x="1712" y="241.3" width="37" height="37.6" fill="#31c1ed"/>
<rect x="1711" y="241" width="38" height="0.7" fill="#8fd8f0" opacity="0.6"/>
<rect x="1711.3" y="279" width="0.7" height="375" fill="#dfe8e4"/>
<g transform="translate(1730.2,221.8)"><path d="M-14.6,0.2 C-9,-6.5 -4.5,-8.8 0,-8.8 C4.5,-8.8 9,-6.5 14.6,0.2 C9,6.8 4.5,8.9 0,8.9 C-4.5,8.9 -9,6.8 -14.6,0.2 Z" fill="#fff" stroke="#2b2b2b" stroke-width="1.4"/><circle cx="0" cy="-1" r="7.6" fill="#fff" stroke="#2b2b2b" stroke-width="1"/><circle cx="0" cy="-1" r="6.2" fill="none" stroke="#2b2b2b" stroke-width="0.6"/><circle cx="0" cy="-1.2" r="4.9" fill="#262626"/></g>
<path d="M1717.2,247.6 L1743.1,256.1 L1731.9,258.5 L1742.6,268.6 L1739.2,272.4 L1727.7,262.3 L1725.8,272.4 Z" fill="#fff" stroke="#2b2b2b" stroke-width="1.4" stroke-linejoin="miter"/>
<path d="M1741,278.8 L1749,270.8 L1749,278.8 Z" fill="#222"/>
<g transform="translate(1730.1,299.8)"><rect x="-3.7" y="-15.8" width="7.4" height="4" rx="1.2" fill="#2b2b2b"/><rect x="-2.3" y="-14.7" width="4.6" height="1.8" rx="0.4" fill="#ffffff"/><rect x="-0.8" y="-12" width="1.6" height="1.6" fill="#2b2b2b"/><line x1="-8" y1="-8" x2="-9.8" y2="-9.8" stroke="#2b2b2b" stroke-width="1.1"/><line x1="-11" y1="-8.8" x2="-8.8" y2="-11.2" stroke="#2b2b2b" stroke-width="1.1"/><circle r="11.2" fill="#f4f4f4" stroke="#2b2b2b" stroke-width="1.4"/><circle r="8.899999999999999" fill="#ffffff" stroke="#2b2b2b" stroke-width="1.4"/></g>
<circle cx="1730.1" cy="300.2" r="0.9" fill="#2b2b2b"/><rect x="1729.6" y="292.5" width="1" height="2" fill="#2b2b2b"/>
<line x1="1717.6" y1="309.6" x2="1743.2" y2="285" stroke="#fff" stroke-width="3"/>
<line x1="1717.6" y1="309.6" x2="1743.2" y2="285" stroke="#2b2b2b" stroke-width="1.6" stroke-linecap="round"/>
<path d="M1741,315.8 L1749,307.8 L1749,315.8 Z" fill="#222"/>
<g stroke="#2b2b2b" stroke-width="1.3" stroke-linejoin="round" fill="none">
<path d="M1715.5,323.4 L1727,323.4 L1743.6,339.2 L1732.6,349.8 L1715.5,334 Z" fill="#fff"/>
<path d="M1716.6,333.5 L1722.2,334.2 L1729.1,342.5 L1728.4,344.6 Z" fill="#dedede" stroke="none"/>
<path d="M1722.9,330 L1727.7,329.3 L1736.7,337.6 L1733.3,340.6 Z" fill="#ececec" stroke="none"/>
<path d="M1715.5,323.4 L1721.6,323.4 L1715.5,329.6 Z" fill="#222" stroke="none"/>
<path d="M1716.3,328.6 L1721.3,323.6 M1726.7,323.8 L1727.7,329.3 L1722.9,330 L1722.2,334.2 L1716.6,333.5 M1727.7,329.3 L1736.7,337.6 M1722.9,330 L1733.3,340.4 M1722.2,334.2 L1729.1,342.5 M1738.5,335.6 L1728.4,344.6 M1740.9,337.6 L1730.5,346.7"/>
</g>
<path d="M1741,353.6 L1749,345.6 L1749,353.6 Z" fill="#222"/>
<line x1="1718.2" y1="360.2" x2="1741" y2="383.4" stroke="#2b2b2b" stroke-width="3.3" stroke-linecap="round"/>
<line x1="1718.2" y1="360.2" x2="1741" y2="383.4" stroke="#fff" stroke-width="1.0" stroke-linecap="round"/>
<circle cx="1744" cy="361.4" r="5" fill="#ff0d82"/>
<path d="M1741,390.7 L1749,382.7 L1749,390.7 Z" fill="#222"/>
<g stroke="#2b2b2b" stroke-width="1.3" stroke-linejoin="round" fill="none">
<path d="M1714.6,404.6 L1724.6,394.6 L1745.7,414.3 L1735.7,424.4 Z" fill="#e8e8e8"/>
<path d="M1714.6,404.6 L1724.6,394.6 L1729.3,399 L1719.3,409 Z" fill="#fafafa"/>
<path d="M1719.3,409 L1722.5,405.8 L1737.6,420.5 L1735.7,424.4 Z" fill="#dcdcdc" stroke="none"/>
<path d="M1718.6,400.6 L1723.4,405 M1722.5,405.8 L1738.6,421.2 M1733.7,422.4 L1743.7,412.4"/>
</g>
<circle cx="1730" cy="447.8" r="3.1" fill="#222"/>
<path d="M1715.7,482 L1726.8,473.5 L1726.8,479.1 L1734,479.1 C1740,479.1 1743.4,483 1743.4,488 C1743.4,493.5 1738,497.5 1731.9,497.5 L1731.9,492.2 C1735,492.2 1737.6,490.6 1737.6,488.2 C1737.6,485.6 1735.5,484.2 1733,484.2 L1726.8,484.2 L1726.8,490.2 Z" fill="#fff" stroke="#2b2b2b" stroke-width="1.3" stroke-linejoin="miter"/>
<g stroke="#2b2b2b" stroke-width="1.1" fill="#f2f2f2">
<rect x="1726.8" y="509.2" width="6.4" height="2.6" rx="0.8"/>
<path d="M1720.6,517.4 L1739.6,517.4 C1740.4,522 1740.4,528 1739.6,532.2 L1720.6,532.2 C1719.8,528 1719.8,522 1720.6,517.4 Z" fill="#e4e4e4"/>
<rect x="1725.4" y="517.4" width="9.5" height="14.8" fill="#f3f3f3" stroke="none"/>
<path d="M1725.4,517.4 L1725.4,532.2 M1734.9,517.4 L1734.9,532.2" fill="none"/>
<rect x="1719.4" y="512" width="21.2" height="5.2" rx="2"/>
<path d="M1721.6,532.2 L1738.4,532.2 L1737.6,534.6 L1722.4,534.6 Z"/>
</g>
<g stroke="#2b2b2b" stroke-width="1.1" fill="#f4f4f4">
<rect x="1725.8" y="547" width="7.4" height="2.6" rx="0.8"/>
<path d="M1725.6,568.4 L1723.4,573.4 L1725.4,573.4 L1727.8,568.4 Z"/>
<path d="M1733.3,568.4 L1735.5,573.4 L1733.5,573.4 L1731.1,568.4 Z"/>
<rect x="1717.7" y="549.8" width="23.6" height="16.6" rx="2"/>
<rect x="1720.6" y="552.8" width="17.6" height="10.4" rx="1" fill="#d6d6d6"/>
<rect x="1722.2" y="566.4" width="14.9" height="2" rx="0.6"/>
</g>
<circle cx="1744" cy="549.1" r="5" fill="#ff0d82"/>
<path d="M1741,578.6 L1749,570.6 L1749,578.6 Z" fill="#222"/>
<g stroke="#2b2b2b" stroke-width="1.1" fill="#fafafa">
<path d="M1724.4,591.8 L1725.6,588.6 L1733.6,588.6 L1734.8,591.8 Z"/>
<rect x="1717" y="591.8" width="26.6" height="17.6" rx="2"/>
<rect x="1726.5" y="590" width="5.6" height="1.4" fill="#2b2b2b" stroke="none"/>
<circle cx="1727.3" cy="599.9" r="6.7"/>
<circle cx="1727.3" cy="599.9" r="5" fill="#2b2b2b" stroke="none"/>
<circle cx="1728.3" cy="598.4" r="1.5" fill="#fff" stroke="none"/>
<circle cx="1739.2" cy="597.3" r="1.7"/>
</g>
<g stroke="#2b2b2b" stroke-width="1.3" fill="#fff">
<rect x="1719.1" y="624.6" width="22.1" height="22.9" rx="2.5"/>
<path d="M1724.8,625 L1724.8,623.7 C1726.6,623.5 1727.7,623 1728.2,621.7 C1728.8,620.2 1731.4,620.2 1732,621.7 C1732.5,623 1733.6,623.5 1735.4,623.7 L1735.4,625" />
<path d="M1722.9,630.6 L1737.7,630.6 M1722.9,635.7 L1737.7,635.7 M1722.9,640.8 L1737.7,640.8" fill="none" stroke-width="1.2"/>
</g>
<g shape-rendering="crispEdges">
<rect x="1712" y="654" width="18" height="18.6" fill="#00aeef"/>
<rect x="1730" y="654" width="19" height="18.6" fill="#fff200"/>
<rect x="1712" y="672.6" width="18" height="18.4" fill="#ff0d82"/>
<rect x="1730" y="672.6" width="19" height="18.4" fill="#000"/>
<rect x="1712" y="691" width="37" height="38" fill="#fff200"/>
</g>
</svg>
</body></html>
